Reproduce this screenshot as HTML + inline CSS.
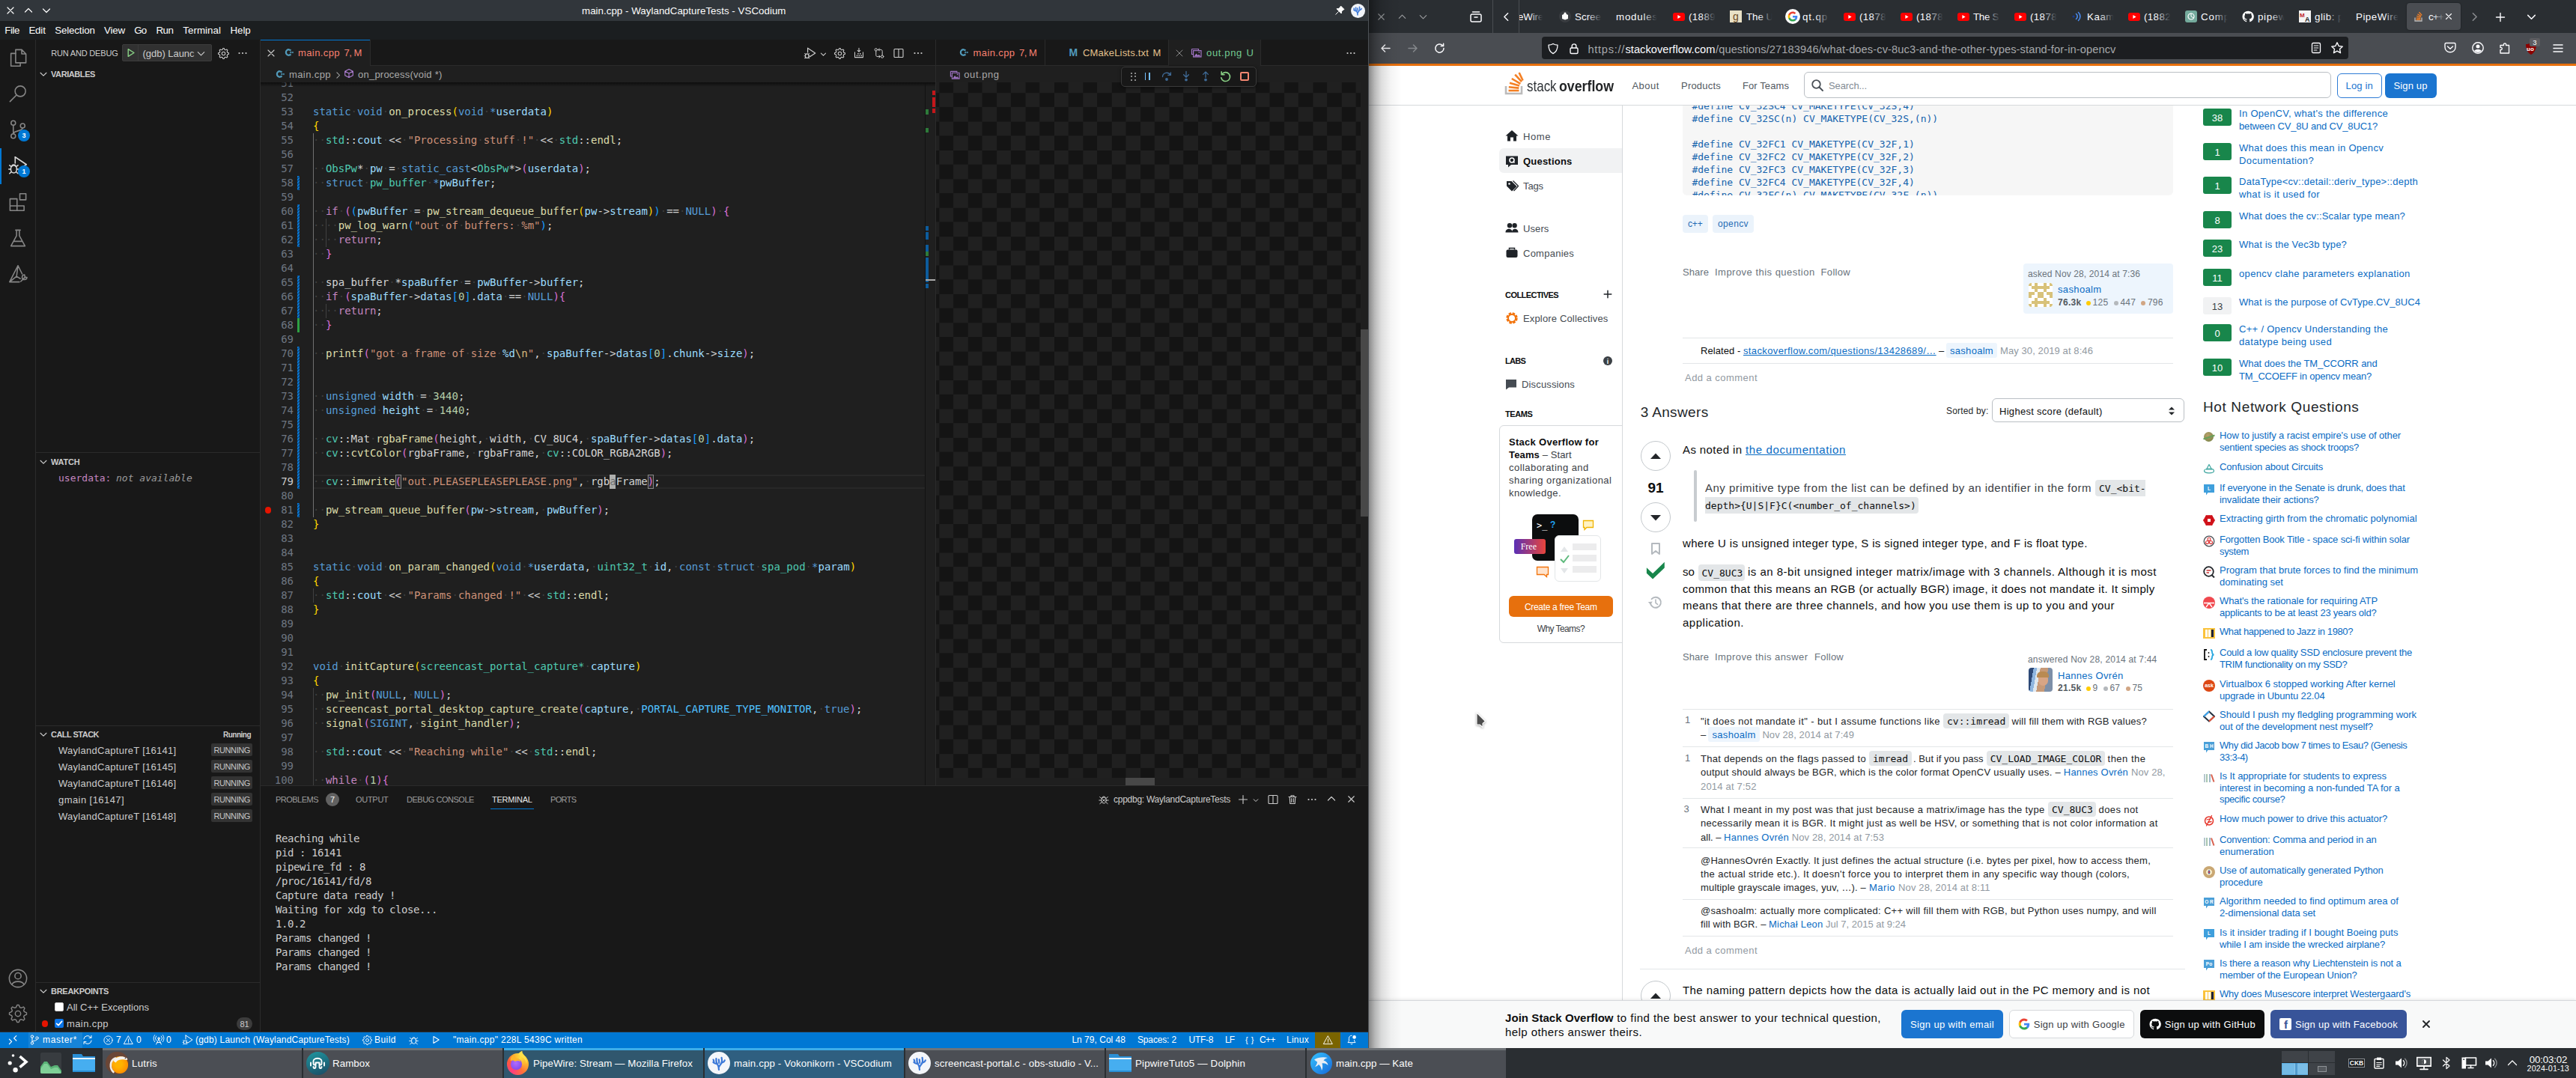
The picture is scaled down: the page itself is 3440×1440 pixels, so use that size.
<!DOCTYPE html>
<html><head><meta charset="utf-8"><title>desktop</title>
<style>
html,body{margin:0;padding:0;background:#2a2e32;}
body{width:3440px;height:1440px;position:relative;overflow:hidden;font-family:"Liberation Sans",sans-serif;}
div,span.t,svg{position:absolute;box-sizing:border-box;}
span.t{white-space:pre;display:block;}
.s{font-family:"Liberation Sans",sans-serif;}
.m{font-family:"DejaVu Sans Mono","Liberation Mono",monospace;}

</style></head><body>
<div style="left:1828px;top:0px;width:1612px;height:44px;background:#2a2e32;"></div>
<div style="left:1828px;top:44px;width:1612px;height:41px;background:#4a4d52;"></div>
<svg style="left:1836.5px;top:14.5px;" width="15" height="15" viewBox="0 0 16 16"><path d="M4 4 L12 12 M12 4 L4 12" fill="none" stroke="#9a9c9f" stroke-width="1.2" stroke-linecap="round" stroke-linejoin="round"/></svg>
<svg style="left:1864.5px;top:14.5px;" width="15" height="15" viewBox="0 0 16 16"><path d="M3.5 10 L8 5.5 L12.5 10" fill="none" stroke="#9a9c9f" stroke-width="1.2" stroke-linecap="round" stroke-linejoin="round"/></svg>
<svg style="left:1892.5px;top:14.5px;" width="15" height="15" viewBox="0 0 16 16"><path d="M3.5 6 L8 10.5 L12.5 6" fill="none" stroke="#9a9c9f" stroke-width="1.2" stroke-linecap="round" stroke-linejoin="round"/></svg>
<svg style="left:1962px;top:13px;" width="18" height="18" viewBox="0 0 18 18"><rect x="2" y="6" width="14" height="10" rx="2" fill="none" stroke="#fbfbfe" stroke-width="1.5" stroke-linecap="round" stroke-linejoin="round"/><path d="M4.5 3 H13.5 M7 10 H11" fill="none" stroke="#fbfbfe" stroke-width="1.5" stroke-linecap="round" stroke-linejoin="round"/></svg>
<div style="left:1993px;top:0px;width:1px;height:44px;background:#4a4d52;"></div>
<div style="left:2028px;top:0px;width:1px;height:44px;background:#4a4d52;"></div>
<svg style="left:2002.5px;top:13.5px;" width="17" height="17" viewBox="0 0 16 16"><path d="M10 3.5 L5.5 8 L10 12.5" fill="none" stroke="#fbfbfe" stroke-width="1.4" stroke-linecap="round" stroke-linejoin="round"/></svg>
<span class="t s" style="left:2027.00px;top:13.00px;font-size:13.33px;line-height:19px;color:#fbfbfe;letter-spacing:-0.162px;">eWire</span>
<div style="left:2043px;top:8px;width:20px;height:28px;background:linear-gradient(90deg,rgba(42,46,50,0),#2a2e32 85%)"></div>
<div style="left:2020px;top:6px;width:8px;height:32px;background:#2a2e32;"></div>
<div style="left:2028px;top:0px;width:1px;height:44px;background:#4a4d52;"></div>
<div style="left:2082px;top:14px;width:16px;height:16px;border-radius:8px;background:#3a3d41"></div>
<svg style="left:2082px;top:14px;" width="16" height="16" viewBox="0 0 16 16"><path d="M4 6 L8 4 L12 6 V11 L8 12.5 L4 11 Z" fill="#fff"/><circle cx="8" cy="4" r="1.6" fill="#fff"/></svg>
<span class="t s" style="left:2103.00px;top:13.00px;font-size:13.33px;line-height:19px;color:#fbfbfe;letter-spacing:0.036px;">Scree</span>
<div style="left:2120px;top:8px;width:22px;height:28px;background:linear-gradient(90deg,rgba(42,46,50,0),#2a2e32 85%)"></div>
<span class="t s" style="left:2158.00px;top:13.00px;font-size:13.33px;line-height:19px;color:#fbfbfe;letter-spacing:0.802px;">modules</span>
<div style="left:2194px;top:8px;width:22px;height:28px;background:linear-gradient(90deg,rgba(42,46,50,0),#2a2e32 85%)"></div>
<div style="left:2234px;top:16.5px;width:16px;height:11px;border-radius:3px;background:#ff0000"></div>
<svg style="left:2234px;top:16.5px;" width="16" height="11" viewBox="0 0 16 11"><path d="M6.4 3 L10.6 5.5 L6.4 8 Z" fill="#fff"/></svg>
<span class="t s" style="left:2255.00px;top:13.00px;font-size:13.33px;line-height:19px;color:#fbfbfe;letter-spacing:0.381px;">(1889</span>
<div style="left:2272px;top:8px;width:22px;height:28px;background:linear-gradient(90deg,rgba(42,46,50,0),#2a2e32 85%)"></div>
<div style="left:2310px;top:14px;width:16px;height:16px;background:#e9e1c6"></div>
<span class="t s" style="left:2314.11px;top:12.00px;font-size:14px;line-height:20px;color:#6b4a1e;">g</span>
<span class="t s" style="left:2332.00px;top:13.00px;font-size:13.33px;line-height:19px;color:#fbfbfe;letter-spacing:-0.060px;">The U</span>
<div style="left:2348px;top:8px;width:22px;height:28px;background:linear-gradient(90deg,rgba(42,46,50,0),#2a2e32 85%)"></div>
<div style="left:2384px;top:12px;width:20px;height:20px;border-radius:10px;background:#fff"></div>
<svg style="left:2387px;top:15px;" width="14" height="14" viewBox="0 0 16 16"><path d="M15.2 8.2 c0-.5 0-1-.1-1.4 H8 v2.8 h4 c-.2 1-.7 1.7-1.5 2.3 v1.9 h2.4 c1.5-1.3 2.3-3.3 2.3-5.600z" fill="#4285f4"/><path d="M8 15.5 c2 0 3.7-.7 4.9-1.8 l-2.4-1.9 c-.7.5-1.5.700-2.5.700-1.9 0-3.6-1.3-4.1-3.1 H1.4 v1.9 C2.6 13.8 5.1 15.5 8 15.500z" fill="#34a853"/><path d="M3.9 9.4 c-.3-.9-.3-1.9 0-2.8 V4.7 H1.4 c-1 2-1 4.6 0 6.600z" fill="#fbbc05"/><path d="M8 3.5 c1.1 0 2 .4 2.8 1.1 l2.1-2.1 C11.6 1.2 9.9.5 8 .5 5.1.5 2.6 2.2 1.4 4.7 l2.5 1.9 C4.4 4.8 6.1 3.5 8 3.500z" fill="#ea4335"/></svg>
<span class="t s" style="left:2407.00px;top:13.00px;font-size:13.33px;line-height:19px;color:#fbfbfe;letter-spacing:0.870px;">qt.qp</span>
<div style="left:2424px;top:8px;width:22px;height:28px;background:linear-gradient(90deg,rgba(42,46,50,0),#2a2e32 85%)"></div>
<div style="left:2462px;top:16.5px;width:16px;height:11px;border-radius:3px;background:#ff0000"></div>
<svg style="left:2462px;top:16.5px;" width="16" height="11" viewBox="0 0 16 11"><path d="M6.4 3 L10.6 5.5 L6.4 8 Z" fill="#fff"/></svg>
<span class="t s" style="left:2483.00px;top:13.00px;font-size:13.33px;line-height:19px;color:#fbfbfe;letter-spacing:0.381px;">(1878</span>
<div style="left:2500px;top:8px;width:22px;height:28px;background:linear-gradient(90deg,rgba(42,46,50,0),#2a2e32 85%)"></div>
<div style="left:2538px;top:16.5px;width:16px;height:11px;border-radius:3px;background:#ff0000"></div>
<svg style="left:2538px;top:16.5px;" width="16" height="11" viewBox="0 0 16 11"><path d="M6.4 3 L10.6 5.5 L6.4 8 Z" fill="#fff"/></svg>
<span class="t s" style="left:2559.00px;top:13.00px;font-size:13.33px;line-height:19px;color:#fbfbfe;letter-spacing:0.381px;">(1878</span>
<div style="left:2576px;top:8px;width:22px;height:28px;background:linear-gradient(90deg,rgba(42,46,50,0),#2a2e32 85%)"></div>
<div style="left:2614px;top:16.5px;width:16px;height:11px;border-radius:3px;background:#ff0000"></div>
<svg style="left:2614px;top:16.5px;" width="16" height="11" viewBox="0 0 16 11"><path d="M6.4 3 L10.6 5.5 L6.4 8 Z" fill="#fff"/></svg>
<span class="t s" style="left:2635.00px;top:13.00px;font-size:13.33px;line-height:19px;color:#fbfbfe;letter-spacing:-0.313px;">The S</span>
<div style="left:2652px;top:8px;width:22px;height:28px;background:linear-gradient(90deg,rgba(42,46,50,0),#2a2e32 85%)"></div>
<div style="left:2690px;top:16.5px;width:16px;height:11px;border-radius:3px;background:#ff0000"></div>
<svg style="left:2690px;top:16.5px;" width="16" height="11" viewBox="0 0 16 11"><path d="M6.4 3 L10.6 5.5 L6.4 8 Z" fill="#fff"/></svg>
<span class="t s" style="left:2711.00px;top:13.00px;font-size:13.33px;line-height:19px;color:#fbfbfe;letter-spacing:0.381px;">(1878</span>
<div style="left:2728px;top:8px;width:22px;height:28px;background:linear-gradient(90deg,rgba(42,46,50,0),#2a2e32 85%)"></div>
<svg style="left:2766px;top:14px;" width="16" height="16" viewBox="0 0 16 16"><circle cx="3" cy="8" r="1.6" fill="#1b3a8a"/><path d="M6.5 4.5 A4.5 4.5 0 0 1 6.5 11.5 M9.5 2.5 A7.5 7.5 0 0 1 9.5 13.5" fill="none" stroke="#4a8cf0" stroke-width="1.6" stroke-linecap="round" stroke-linejoin="round"/></svg>
<span class="t s" style="left:2787.00px;top:13.00px;font-size:13.33px;line-height:19px;color:#fbfbfe;letter-spacing:0.544px;">Kaam</span>
<div style="left:2804px;top:8px;width:22px;height:28px;background:linear-gradient(90deg,rgba(42,46,50,0),#2a2e32 85%)"></div>
<div style="left:2842px;top:16.5px;width:16px;height:11px;border-radius:3px;background:#ff0000"></div>
<svg style="left:2842px;top:16.5px;" width="16" height="11" viewBox="0 0 16 11"><path d="M6.4 3 L10.6 5.5 L6.4 8 Z" fill="#fff"/></svg>
<span class="t s" style="left:2863.00px;top:13.00px;font-size:13.33px;line-height:19px;color:#fbfbfe;letter-spacing:0.381px;">(1882</span>
<div style="left:2880px;top:8px;width:22px;height:28px;background:linear-gradient(90deg,rgba(42,46,50,0),#2a2e32 85%)"></div>
<div style="left:2918px;top:14px;width:16px;height:16px;border-radius:3px;background:#74aa9c"></div>
<svg style="left:2918px;top:14px;" width="16" height="16" viewBox="0 0 16 16"><circle cx="8" cy="8" r="4" fill="none" stroke="#fff" stroke-width="1.2" stroke-linecap="round" stroke-linejoin="round"/><path d="M8 4 V8 L11.5 10" fill="none" stroke="#fff" stroke-width="1" stroke-linecap="round" stroke-linejoin="round"/></svg>
<span class="t s" style="left:2939.00px;top:13.00px;font-size:13.33px;line-height:19px;color:#fbfbfe;letter-spacing:0.861px;">Comp</span>
<div style="left:2956px;top:8px;width:22px;height:28px;background:linear-gradient(90deg,rgba(42,46,50,0),#2a2e32 85%)"></div>
<svg style="left:2994px;top:14px;" width="16" height="16" viewBox="0 0 16 16"><path d="M8 .7 a7.5 7.5 0 0 0 -2.4 14.6 c.4.1.5-.2.5-.4 v-1.3 c-2.1.500-2.5-1-2.5-1 -.3-.9-.8-1.1-.8-1.1 -.7-.5.1-.5.1-.5 .700.1 1.1.800 1.1.800 .700 1.1 1.8.800 2.2.600 .100-.5.3-.8.5-1 -1.7-.2-3.4-.8-3.4-3.7 0-.8.3-1.5.800-2 -.1-.2-.3-1 .1-2 0 0 .600-.2 2.1.800 a7.2 7.2 0 0 1 3.8 0 c1.4-1 2.1-.8 2.1-.8 .4 1 .200 1.8.100 2 .500.5.800 1.2.800 2 0 2.9-1.8 3.5-3.4 3.7 .300.2.500.7.500 1.4 v2.1 c0 .200.1.500.5.400 A7.5 7.5 0 0 0 8 .7z" fill="#fff"/></svg>
<span class="t s" style="left:3015.00px;top:13.00px;font-size:13.33px;line-height:19px;color:#fbfbfe;letter-spacing:0.634px;">pipew</span>
<div style="left:3032px;top:8px;width:22px;height:28px;background:linear-gradient(90deg,rgba(42,46,50,0),#2a2e32 85%)"></div>
<div style="left:3070px;top:14px;width:16px;height:16px;background:#f4f4f4"></div>
<span class="t s" style="left:3071.00px;top:14.00px;font-size:8px;line-height:13px;color:#c0222a;font-weight:700;">M</span>
<span class="t s" style="left:3078.00px;top:19.00px;font-size:9px;line-height:14px;color:#222;font-weight:700;">A</span>
<span class="t s" style="left:3091.00px;top:13.00px;font-size:13.33px;line-height:19px;color:#fbfbfe;letter-spacing:0.490px;">glib: p</span>
<div style="left:3108px;top:8px;width:22px;height:28px;background:linear-gradient(90deg,rgba(42,46,50,0),#2a2e32 85%)"></div>
<span class="t s" style="left:3146.00px;top:13.00px;font-size:13.33px;line-height:19px;color:#fbfbfe;letter-spacing:0.491px;">PipeWire</span>
<div style="left:3184px;top:8px;width:22px;height:28px;background:linear-gradient(90deg,rgba(42,46,50,0),#2a2e32 85%)"></div>
<div style="left:3214px;top:4px;width:72px;height:36px;border-radius:4px;background:#4a4d52;box-shadow:0 0 2px rgba(0,0,0,.5)"></div>
<svg style="left:3222px;top:14px;" width="16" height="16" viewBox="0 0 16 16"><path d="M3 9.5 V14 H12 V9.5" fill="none" stroke="#bcbbbb" stroke-width="1.3"/><path d="M4.6 12 H10.4 M4.7 9.8 L10.3 10.4 M5.2 7.3 L10.6 8.8 M6.4 4.7 L11.2 7.6 M8.4 2.3 L12.2 6.4" fill="none" stroke="#f48024" stroke-width="1.3"/></svg>
<span class="t s" style="left:3243.00px;top:13.00px;font-size:13.33px;line-height:19px;color:#fbfbfe;letter-spacing:-0.745px;">c++</span>
<div style="left:3250px;top:8px;width:14px;height:28px;background:linear-gradient(90deg,rgba(74,77,82,0),#4a4d52)"></div>
<svg style="left:3263.0px;top:15.0px;" width="14" height="14" viewBox="0 0 16 16"><path d="M4 4 L12 12 M12 4 L4 12" fill="none" stroke="#fbfbfe" stroke-width="1.3" stroke-linecap="round" stroke-linejoin="round"/></svg>
<svg style="left:3295.5px;top:13.5px;" width="17" height="17" viewBox="0 0 16 16"><path d="M6 3.5 L10.5 8 L6 12.5" fill="none" stroke="#8b8d91" stroke-width="1.4" stroke-linecap="round" stroke-linejoin="round"/></svg>
<svg style="left:3331.0px;top:14.5px;" width="16" height="16" viewBox="0 0 16 16"><path d="M8 2.5 V13.5 M2.5 8 H13.5" fill="none" stroke="#fbfbfe" stroke-width="1.4" stroke-linecap="round" stroke-linejoin="round"/></svg>
<svg style="left:3371.5px;top:13.5px;" width="17" height="17" viewBox="0 0 16 16"><path d="M3.5 6 L8 10.5 L12.5 6" fill="none" stroke="#fbfbfe" stroke-width="1.4" stroke-linecap="round" stroke-linejoin="round"/></svg>
<svg style="left:1842px;top:56px;" width="17" height="17" viewBox="0 0 17 17"><path d="M14 8.5 H3 M7.5 4 L3 8.5 L7.5 13" fill="none" stroke="#fbfbfe" stroke-width="1.5" stroke-linecap="round" stroke-linejoin="round"/></svg>
<svg style="left:1878px;top:56px;" width="17" height="17" viewBox="0 0 17 17"><path d="M3 8.5 H14 M9.5 4 L14 8.5 L9.5 13" fill="none" stroke="#85888c" stroke-width="1.5" stroke-linecap="round" stroke-linejoin="round"/></svg>
<svg style="left:1914px;top:56px;" width="17" height="17" viewBox="0 0 17 17"><path d="M14 8.5 A5.6 5.6 0 1 1 12.3 4.5 M13.6 2.2 V5.6 H10.2" fill="none" stroke="#fbfbfe" stroke-width="1.5" stroke-linecap="round" stroke-linejoin="round"/></svg>
<div style="left:2059px;top:49px;width:1077px;height:30px;border-radius:4px;background:#1c1e21"></div>
<svg style="left:2066px;top:56.5px;" width="16" height="16" viewBox="0 0 16 16"><path d="M8 1.5 C10 2.8 12 3.2 14 3.2 C14 9 12 12.5 8 14.6 C4 12.5 2 9 2 3.2 C4 3.2 6 2.8 8 1.5 Z" fill="none" stroke="#fbfbfe" stroke-width="1.3" stroke-linecap="round" stroke-linejoin="round"/></svg>
<svg style="left:2094px;top:56px;" width="16" height="17" viewBox="0 0 16 17"><rect x="3" y="8" width="10" height="7.5" rx="1.5" fill="none" stroke="#fbfbfe" stroke-width="1.4" stroke-linecap="round" stroke-linejoin="round"/><path d="M5.2 8 V5.5 C5.2 2 10.8 2 10.8 5.5 V8" fill="none" stroke="#fbfbfe" stroke-width="1.4" stroke-linecap="round" stroke-linejoin="round"/></svg>
<span class="t s" style="left:2120.50px;top:56.00px;font-size:14.67px;line-height:20px;color:#a6a8ab;letter-spacing:0.684px;">https://</span>
<span class="t s" style="left:2170.50px;top:56.00px;font-size:14.67px;line-height:20px;color:#fbfbfe;letter-spacing:0.009px;">stackoverflow.com</span>
<span class="t s" style="left:2291.00px;top:56.00px;font-size:14.67px;line-height:20px;color:#a6a8ab;letter-spacing:0.085px;">/questions/27183946/what-does-cv-8uc3-and-the-other-types-stand-for-in-opencv</span>
<svg style="left:3084.5px;top:56px;" width="16" height="16" viewBox="0 0 16 16"><rect x="2.5" y="1.5" width="11" height="13" rx="1.5" fill="none" stroke="#fbfbfe" stroke-width="1.3" stroke-linecap="round" stroke-linejoin="round"/><path d="M5.2 5 H10.8 M5.2 8 H10.8 M5.2 11 H9" fill="none" stroke="#fbfbfe" stroke-width="1.1" stroke-linecap="round" stroke-linejoin="round"/></svg>
<svg style="left:3112px;top:55px;" width="18" height="18" viewBox="0 0 18 18"><path d="M9 1.8 L11.2 6.5 L16.3 7.1 L12.5 10.6 L13.5 15.7 L9 13.2 L4.5 15.7 L5.5 10.6 L1.7 7.1 L6.8 6.5 Z" fill="none" stroke="#fbfbfe" stroke-width="1.4" stroke-linecap="round" stroke-linejoin="round"/></svg>
<svg style="left:3263px;top:55px;" width="18" height="18" viewBox="0 0 18 18"><path d="M2 4 C2 3 2.8 2.5 3.5 2.5 H14.5 C15.2 2.5 16 3 16 4 V8 C16 17 2 17 2 8 Z" fill="none" stroke="#fbfbfe" stroke-width="1.4" stroke-linecap="round" stroke-linejoin="round"/><path d="M5.5 7 L9 10.2 L12.5 7" fill="none" stroke="#fbfbfe" stroke-width="1.5" stroke-linecap="round" stroke-linejoin="round"/></svg>
<svg style="left:3299.5px;top:55px;" width="18" height="18" viewBox="0 0 18 18"><circle cx="9" cy="9" r="7.2" fill="none" stroke="#fbfbfe" stroke-width="1.4" stroke-linecap="round" stroke-linejoin="round"/><circle cx="9" cy="7" r="2.5" fill="#fbfbfe"/><path d="M4.2 12.8 C6 10.4 12 10.4 13.8 12.8 C12 15.8 6 15.8 4.2 12.8 Z" fill="#fbfbfe"/></svg>
<svg style="left:3336px;top:54.5px;" width="18" height="18" viewBox="0 0 18 18"><path d="M3 16 V11.5 C6 12.5 6 7.5 3 8.5 V5.5 H7.5 C6.5 2 11.5 2 10.5 5.5 H14.5 V16 Z" fill="none" stroke="#fbfbfe" stroke-width="1.4" stroke-linecap="round" stroke-linejoin="round"/></svg>
<svg style="left:3371px;top:56px;" width="18" height="18" viewBox="0 0 18 18"><path d="M9 1 C11 2.5 13.5 3 16 3 C16 10 13.5 14.5 9 17 C4.5 14.5 2 10 2 3 C4.5 3 7 2.5 9 1 Z" fill="#8b0000"/></svg>
<span class="t s" style="left:3374.11px;top:59.00px;font-size:8px;line-height:13px;color:#fff;font-weight:700;">uo</span>
<div style="left:3378px;top:51px;width:14px;height:11px;border-radius:2px;background:#5d5d61"></div>
<span class="t s" style="left:3382.36px;top:49.00px;font-size:9.5px;line-height:15px;color:#fff;">3</span>
<svg style="left:3407px;top:56px;" width="18" height="17" viewBox="0 0 18 17"><path d="M3 4 H15 M3 8.5 H15 M3 13 H15" fill="none" stroke="#fbfbfe" stroke-width="1.5" stroke-linecap="round" stroke-linejoin="round"/></svg>
<div style="left:1828px;top:85px;width:1612px;height:3px;background:#e7700d;"></div>
<div style="left:1828px;top:88px;width:1612px;height:1312px;background:#fff;"></div>
<div style="left:1828px;top:140px;width:1612px;height:1px;background:#d6d9dc;"></div>
<svg style="left:2009px;top:96px;" width="26" height="32" viewBox="0 0 26 32"><path d="M2 19 V29 H23 V19" fill="none" stroke="#bcbbbb" stroke-width="2.6"/><path d="M5.5 25 H19.5" stroke="#f48024" stroke-width="2.6"/><path d="M5.8 20.2 L19.3 21.6" stroke="#f48024" stroke-width="2.6"/><path d="M7 14.8 L20 18.4" stroke="#f48024" stroke-width="2.6"/><path d="M9.8 9 L21.4 15.8" stroke="#f48024" stroke-width="2.6"/><path d="M14.2 3.6 L23 13.2" stroke="#f48024" stroke-width="2.6"/><path d="M19.6 1 L24.6 11.5" stroke="#f48024" stroke-width="2.6"/></svg>
<span class="t s" style="left:2039.00px;top:101.00px;font-size:21px;line-height:27px;color:#2f3337;transform:scaleX(0.808);transform-origin:0 0;">stack</span>
<span class="t s" style="left:2082.00px;top:101.00px;font-size:21px;line-height:27px;color:#222426;font-weight:700;transform:scaleX(0.845);transform-origin:0 0;">overflow</span>
<span class="t s" style="left:2179.40px;top:105.00px;font-size:13px;line-height:19px;color:#525960;letter-spacing:0.525px;">About</span>
<span class="t s" style="left:2245.00px;top:105.00px;font-size:13px;line-height:19px;color:#525960;letter-spacing:0.212px;">Products</span>
<span class="t s" style="left:2327.00px;top:105.00px;font-size:13px;line-height:19px;color:#525960;letter-spacing:0.093px;">For Teams</span>
<div style="left:2409px;top:96px;width:704px;height:35px;border:1px solid #babfc4;border-radius:6px;background:#fff"></div>
<svg style="left:2418px;top:104.5px;" width="18" height="18" viewBox="0 0 18 18"><circle cx="7.5" cy="7.5" r="5.3" fill="none" stroke="#4b5158" stroke-width="1.8" stroke-linecap="round" stroke-linejoin="round"/><path d="M11.5 11.5 L16 16" fill="none" stroke="#4b5158" stroke-width="2" stroke-linecap="round" stroke-linejoin="round"/></svg>
<span class="t s" style="left:2442.00px;top:105.00px;font-size:13px;line-height:19px;color:#838c95;letter-spacing:-0.114px;">Search...</span>
<div style="left:3121px;top:98px;width:60px;height:33px;border:1px solid #2e7cd6;border-radius:6px;background:#fff"></div>
<span class="t s" style="left:3132.50px;top:105.00px;font-size:13px;line-height:19px;color:#1b75d0;letter-spacing:0.180px;">Log in</span>
<div style="left:3185px;top:98px;width:69px;height:33px;border-radius:6px;background:#1b75d0"></div>
<span class="t s" style="left:3196.50px;top:105.00px;font-size:13px;line-height:19px;color:#fff;letter-spacing:0.144px;">Sign up</span>
<div style="left:2166px;top:141px;width:1px;height:1196px;background:#d6d9dc;"></div>
<div style="left:2002px;top:198px;width:164px;height:33px;background:#f1f2f3;border-radius:6px 0 0 6px"></div>
<svg style="left:2010px;top:173px;" width="18" height="16" viewBox="0 0 18 16"><path d="M9 1 L17.5 8.5 H15 V15.5 H11 V10.5 H7 V15.5 H3 V8.5 H0.5 Z" fill="#1f2328"/></svg>
<span class="t s" style="left:2034.00px;top:173.00px;font-size:13px;line-height:19px;color:#454b52;letter-spacing:0.581px;">Home</span>
<svg style="left:2010px;top:207px;" width="18" height="17" viewBox="0 0 18 17"><path d="M1 1.5 H17 V13 H8 L4 16.5 V13 H1 Z" fill="#1f2328"/><circle cx="9" cy="7" r="3" fill="none" stroke="#fff" stroke-width="1.6"/><path d="M10.5 8.5 L12.5 10.5" stroke="#fff" stroke-width="1.6"/></svg>
<span class="t s" style="left:2034.00px;top:206.00px;font-size:13px;line-height:19px;color:#0c0d0e;letter-spacing:0.215px;font-weight:700;">Questions</span>
<svg style="left:2010px;top:240px;" width="18" height="16" viewBox="0 0 18 16"><path d="M2 2 H8.5 L15.5 9 L9 15.5 L2 8.5 Z" fill="#1f2328"/><circle cx="5.5" cy="5.5" r="1.3" fill="#fff"/><path d="M10.5 1.5 L17.5 8.5 L11.5 15" fill="none" stroke="#1f2328" stroke-width="1.3"/></svg>
<span class="t s" style="left:2034.00px;top:239.00px;font-size:13px;line-height:19px;color:#454b52;letter-spacing:-0.115px;">Tags</span>
<svg style="left:2010px;top:297px;" width="18" height="15" viewBox="0 0 18 15"><circle cx="6" cy="4.2" r="3.2" fill="#1f2328"/><circle cx="12.6" cy="4.2" r="3.2" fill="#1f2328"/><path d="M0.5 13.5 C0.5 7.5 8.5 7.5 9.3 12 C10 7.5 17.5 7.5 17.5 13.5 Z" fill="#1f2328"/></svg>
<span class="t s" style="left:2034.00px;top:296.00px;font-size:13px;line-height:19px;color:#454b52;letter-spacing:0.091px;">Users</span>
<svg style="left:2010px;top:330px;" width="18" height="15" viewBox="0 0 18 15"><rect x="1.5" y="3.5" width="15" height="10.5" rx="2" fill="#1f2328"/><path d="M5.5 3.5 V1.5 H12.5 V3.5" fill="none" stroke="#1f2328" stroke-width="1.5"/></svg>
<span class="t s" style="left:2034.00px;top:329.00px;font-size:13px;line-height:19px;color:#454b52;letter-spacing:0.249px;">Companies</span>
<span class="t s" style="left:2010.00px;top:386.00px;font-size:11px;line-height:16px;color:#0c0d0e;letter-spacing:-0.546px;font-weight:700;">COLLECTIVES</span>
<svg style="left:2139.5px;top:386.0px;" width="14" height="14" viewBox="0 0 16 16"><path d="M8 2.5 V13.5 M2.5 8 H13.5" fill="none" stroke="#1f2328" stroke-width="1.7" stroke-linecap="round" stroke-linejoin="round"/></svg>
<svg style="left:2009.5px;top:416px;" width="18" height="18" viewBox="0 0 18 18"><circle cx="9" cy="9" r="6" fill="none" stroke="#f2740d" stroke-width="3.4" stroke-dasharray="3.2 1.5"/><circle cx="9" cy="9" r="5" fill="none" stroke="#f2740d" stroke-width="2"/></svg>
<span class="t s" style="left:2034.00px;top:416.00px;font-size:13px;line-height:19px;color:#454b52;letter-spacing:0.156px;">Explore Collectives</span>
<span class="t s" style="left:2010.00px;top:474.00px;font-size:11px;line-height:16px;color:#0c0d0e;letter-spacing:-0.736px;font-weight:700;">LABS</span>
<div style="left:2141px;top:476px;width:12px;height:12px;border-radius:6px;background:#3b4045"></div>
<span class="t s" style="left:2145.75px;top:476.00px;font-size:9px;line-height:14px;color:#fff;font-weight:700;">i</span>
<svg style="left:2010px;top:506px;" width="16" height="15" viewBox="0 0 16 15"><path d="M1 1 H15 V11.5 H5 L1 14.5 Z" fill="#454b52"/></svg>
<span class="t s" style="left:2032.00px;top:504.00px;font-size:13px;line-height:19px;color:#454b52;letter-spacing:0.150px;">Discussions</span>
<span class="t s" style="left:2010.00px;top:545.00px;font-size:11px;line-height:16px;color:#0c0d0e;letter-spacing:-0.400px;font-weight:700;">TEAMS</span>
<div style="left:2002px;top:568px;width:170px;height:291px;border:1px solid #d6d9dc;border-radius:6px 0 0 6px;background:#fff"></div>
<div style="left:2166px;top:560px;width:8px;height:310px;background:#fff;"></div>
<div style="left:2166px;top:141px;width:1px;height:1196px;background:#d6d9dc;"></div>
<span class="t s" style="left:2015.00px;top:581.00px;font-size:13px;line-height:19px;color:#0c0d0e;letter-spacing:0.285px;font-weight:700;">Stack Overflow for</span>
<span class="t s" style="left:2015.00px;top:598.00px;font-size:13px;line-height:19px;color:#0c0d0e;letter-spacing:0.155px;font-weight:700;">Teams</span>
<span class="t s" style="left:2056.00px;top:598.00px;font-size:13px;line-height:19px;color:#3b4045;letter-spacing:0.099px;"> – Start</span>
<span class="t s" style="left:2015.00px;top:615.00px;font-size:13px;line-height:19px;color:#3b4045;letter-spacing:0.452px;">collaborating and</span>
<span class="t s" style="left:2015.00px;top:632.00px;font-size:13px;line-height:19px;color:#3b4045;letter-spacing:0.464px;">sharing organizational</span>
<span class="t s" style="left:2015.00px;top:649.00px;font-size:13px;line-height:19px;color:#3b4045;letter-spacing:0.423px;">knowledge.</span>
<div style="left:2046px;top:687px;width:62px;height:62px;border-radius:7px;background:#0c0d0e"></div>
<span class="t m" style="left:2052.00px;top:693.00px;font-size:12px;line-height:18px;color:#fff;">&gt;_</span>
<span class="t s" style="left:2070.00px;top:692.00px;font-size:12px;line-height:18px;color:#1ea1f2;font-weight:700;">?</span>
<div style="left:2076px;top:715px;width:62px;height:62px;border-radius:6px;background:#fff;border:1px solid #e3e6e8"></div>
<div style="left:2100px;top:726px;width:32px;height:9px;background:#ececed;"></div>
<div style="left:2100px;top:741px;width:32px;height:9px;background:#ececed;"></div>
<div style="left:2100px;top:756px;width:32px;height:9px;background:#ececed;"></div>
<svg style="left:2082px;top:728px;" width="14" height="40" viewBox="0 0 14 40"><path d="M2 9 L7 2 L12 9 Z" fill="#e3e6e8"/><path d="M2 31 L7 38 L12 31 Z" fill="#e3e6e8"/><path d="M2 19 L6 23 L13 14" fill="none" stroke="#5eba7d" stroke-width="2"/></svg>
<div style="left:2022px;top:720px;width:42px;height:20px;border-radius:3px;background:linear-gradient(90deg,#5a2fb5,#e8453c)"></div>
<span class="t s" style="left:2030.66px;top:721.00px;font-size:12px;line-height:18px;color:#fff;font-family:'Liberation Serif',serif;">Free</span>
<svg style="left:2113px;top:694px;" width="16" height="15" viewBox="0 0 16 15"><path d="M1.5 1.5 H14.5 V10.5 H6 L3 13.5 V10.5 H1.5 Z" fill="#fff3c4" stroke="#f0b400" stroke-width="1.3"/></svg>
<svg style="left:2051px;top:756px;" width="18" height="16" viewBox="0 0 18 16"><path d="M1.5 1.5 H16.5 V11.5 H14.5 V14.5 L11 11.5 H1.5 Z" fill="#ffe3cc" stroke="#f2740d" stroke-width="1.3"/></svg>
<div style="left:2015px;top:796px;width:139px;height:28px;border-radius:6px;background:#e7700d"></div>
<span class="t s" style="left:2036.00px;top:802.00px;font-size:12px;line-height:18px;color:#fff;letter-spacing:-0.328px;">Create a free Team</span>
<span class="t s" style="left:2052.70px;top:831.00px;font-size:12px;line-height:18px;color:#3b4045;letter-spacing:-0.583px;">Why Teams?</span>
<div style="left:2247px;top:141px;width:655px;height:120px;border-radius:0 0 6px 6px;background:#f6f6f6;overflow:hidden">
<span class="t m" style="left:12.40px;top:-7.91px;font-size:13px;line-height:17px;color:#1563ad;">#define CV_32SC4 CV_MAKETYPE(CV_32S,4)</span>
<span class="t m" style="left:12.40px;top:9.09px;font-size:13px;line-height:17px;color:#1563ad;">#define CV_32SC(n) CV_MAKETYPE(CV_32S,(n))</span>
<span class="t m" style="left:12.40px;top:43.09px;font-size:13px;line-height:17px;color:#1563ad;">#define CV_32FC1 CV_MAKETYPE(CV_32F,1)</span>
<span class="t m" style="left:12.40px;top:60.09px;font-size:13px;line-height:17px;color:#1563ad;">#define CV_32FC2 CV_MAKETYPE(CV_32F,2)</span>
<span class="t m" style="left:12.40px;top:77.09px;font-size:13px;line-height:17px;color:#1563ad;">#define CV_32FC3 CV_MAKETYPE(CV_32F,3)</span>
<span class="t m" style="left:12.40px;top:94.09px;font-size:13px;line-height:17px;color:#1563ad;">#define CV_32FC4 CV_MAKETYPE(CV_32F,4)</span>
<span class="t m" style="left:12.40px;top:111.09px;font-size:13px;line-height:17px;color:#1563ad;">#define CV_32FC(n) CV_MAKETYPE(CV_32F,(n))</span>
</div>
<div style="left:2247px;top:287px;width:34px;height:24px;border-radius:4px;background:#ebf3fb"></div>
<span class="t s" style="left:2254.00px;top:290.00px;font-size:12px;line-height:18px;color:#1f6bb5;letter-spacing:-0.172px;">c++</span>
<div style="left:2287px;top:287px;width:55px;height:24px;border-radius:4px;background:#ebf3fb"></div>
<span class="t s" style="left:2294.00px;top:290.00px;font-size:12px;line-height:18px;color:#1f6bb5;letter-spacing:0.384px;">opencv</span>
<span class="t s" style="left:2247.00px;top:354.00px;font-size:13px;line-height:19px;color:#6a737c;letter-spacing:0.062px;">Share</span>
<span class="t s" style="left:2290.00px;top:354.00px;font-size:13px;line-height:19px;color:#6a737c;letter-spacing:0.478px;">Improve this question</span>
<span class="t s" style="left:2431.60px;top:354.00px;font-size:13px;line-height:19px;color:#6a737c;letter-spacing:0.306px;">Follow</span>
<div style="left:2701.600px;top:352px;width:200px;height:67px;border-radius:4px;background:#edf5fd"></div>
<span class="t s" style="left:2708.00px;top:357.00px;font-size:12px;line-height:18px;color:#6a737c;letter-spacing:0.124px;">asked Nov 28, 2014 at 7:36</span>
<div style="left:2708.600px;top:378px;width:32px;height:32px;border-radius:4px;background:#fff;overflow:hidden"><svg style="left:0;top:0" width="32" height="32" viewBox="0 0 8 8"><path d="M0 0h1v1h-1z M2 0h1v1h-1z M5 0h1v1h-1z M7 0h1v1h-1z M1 1h2v1h-2z M5 1h2v1h-2z M3 1h2v1h-2z M0 3h1v2h-1z M7 3h1v2h-1z M2 2h1v1h-1z M5 2h1v1h-1z M1 3h1v1h-1z M3 3h2v2h-2z M6 3h1v1h-1z M2 5h1v1h-1z M5 5h1v1h-1z M1 6h2v1h-2z M5 6h2v1h-2z M0 7h1v1h-1z M3 6h2v1h-2z M7 7h1v1h-1z M2 7h1v1h-1z M5 7h1v1h-1z" fill="#d8c27a"/></svg></div>
<span class="t s" style="left:2748.00px;top:377.00px;font-size:13px;line-height:19px;color:#0a6cc4;letter-spacing:0.358px;">sashoalm</span>
<span class="t s" style="left:2748.00px;top:395.00px;font-size:12px;line-height:18px;color:#525960;letter-spacing:0.294px;font-weight:700;">76.3k</span>
<div style="left:2785.5px;top:401.6px;width:6px;height:6px;border-radius:3px;background:#ffcc01"></div>
<span class="t s" style="left:2794.50px;top:395.00px;font-size:12px;line-height:18px;color:#6a737c;letter-spacing:0.326px;">125</span>
<div style="left:2822.5px;top:401.6px;width:6px;height:6px;border-radius:3px;background:#b4b8bc"></div>
<span class="t s" style="left:2831.50px;top:395.00px;font-size:12px;line-height:18px;color:#6a737c;letter-spacing:0.159px;">447</span>
<div style="left:2858.5px;top:401.6px;width:6px;height:6px;border-radius:3px;background:#d1a684"></div>
<span class="t s" style="left:2868.00px;top:395.00px;font-size:12px;line-height:18px;color:#6a737c;letter-spacing:0.159px;">796</span>
<div style="left:2247px;top:451px;width:655px;height:1px;background:#e3e6e8;"></div>
<div style="left:2247px;top:484.5px;width:655px;height:1px;background:#e3e6e8;"></div>
<span class="t s" style="left:2271.00px;top:459.00px;font-size:13px;line-height:19px;color:#0c0d0e;letter-spacing:0.064px;">Related - </span>
<span class="t s" style="left:2328.00px;top:459.00px;font-size:13px;line-height:19px;color:#0a6cc4;letter-spacing:0.370px;text-decoration:underline;">stackoverflow.com/questions/13428689/…</span>
<span class="t s" style="left:2589.00px;top:459.00px;font-size:13px;line-height:19px;color:#0c0d0e;">–</span>
<div style="left:2599px;top:458px;width:68px;height:20px;border-radius:3px;background:#edf5fd"></div>
<span class="t s" style="left:2604.00px;top:459.00px;font-size:13px;line-height:19px;color:#0a6cc4;letter-spacing:0.295px;">sashoalm</span>
<span class="t s" style="left:2671.00px;top:459.00px;font-size:13px;line-height:19px;color:#9199a1;letter-spacing:0.093px;">May 30, 2019 at 8:46</span>
<span class="t s" style="left:2250.00px;top:495.00px;font-size:13px;line-height:19px;color:#9199a1;letter-spacing:0.458px;">Add a comment</span>
<span class="t s" style="left:2190.70px;top:538.00px;font-size:19px;line-height:25px;color:#232629;letter-spacing:0.350px;">3 Answers</span>
<span class="t s" style="left:2599.00px;top:540.00px;font-size:12px;line-height:18px;color:#232629;letter-spacing:0.180px;">Sorted by:</span>
<div style="left:2660px;top:532px;width:257px;height:32px;border:1px solid #babfc4;border-radius:6px;background:#fff"></div>
<span class="t s" style="left:2670.00px;top:540.00px;font-size:13px;line-height:19px;color:#0c0d0e;letter-spacing:0.292px;">Highest score (default)</span>
<svg style="left:2893px;top:541px;" width="14" height="16" viewBox="0 0 14 16"><path d="M3 6.5 L7 2.5 L11 6.5 Z M3 9.5 L7 13.5 L11 9.5 Z" fill="#232629"/></svg>
<div style="left:2191px;top:589px;width:40px;height:40px;border-radius:20px;border:1px solid #c3c8cc;background:#fff"></div>
<svg style="left:2202px;top:602.5px;" width="18" height="13" viewBox="0 0 18 13"><path d="M2 10 L9 2.5 L16 10 Z" fill="#232629"/></svg>
<div style="left:2191px;top:671px;width:40px;height:40px;border-radius:20px;border:1px solid #c3c8cc;background:#fff"></div>
<svg style="left:2202px;top:684.5px;" width="18" height="13" viewBox="0 0 18 13"><path d="M2 3 L9 10.5 L16 3 Z" fill="#232629"/></svg>
<span class="t s" style="left:2200.43px;top:639.00px;font-size:19px;line-height:25px;color:#0c0d0e;font-weight:700;">91</span>
<svg style="left:2204px;top:724px;" width="14" height="18" viewBox="0 0 14 18"><path d="M2 2 H12 V16 L7 12 L2 16 Z" fill="none" stroke="#b4b9be" stroke-width="2" stroke-linecap="round" stroke-linejoin="round"/></svg>
<svg style="left:2195px;top:745px;" width="36" height="32" viewBox="0 0 36 32"><path d="M3.9 13.3 L12.1 21.1 L27.8 5.7 V13.5 L12.1 28.6 L3.9 20.7 Z" fill="#18864b"/></svg>
<svg style="left:2200px;top:795px;" width="20" height="19" viewBox="0 0 20 19"><path d="M5.6 5.2 A7 7 0 1 1 4 10.5" fill="none" stroke="#b4b9be" stroke-width="1.9" stroke-linecap="round" stroke-linejoin="round"/><path d="M0.8 9.2 L4.2 12.4 L6.8 8.6 Z" fill="#b4b9be"/><path d="M11 6 V10.4 L13.6 12.4" fill="none" stroke="#b4b9be" stroke-width="1.6" stroke-linecap="round" stroke-linejoin="round"/></svg>
<span class="t s" style="left:2247.00px;top:590.00px;font-size:15px;line-height:21px;color:#0c0d0e;letter-spacing:0.398px;">As noted in </span>
<span class="t s" style="left:2331.00px;top:590.00px;font-size:15px;line-height:21px;color:#0a6cc4;letter-spacing:0.622px;text-decoration:underline;">the documentation</span>
<div style="left:2261.5px;top:627.5px;width:4px;height:69px;border-radius:2px;background:#c8ccd0"></div>
<span class="t s" style="left:2277.00px;top:641.00px;font-size:15px;line-height:21px;color:#3b4045;letter-spacing:0.482px;">Any primitive type from the list can be defined by an identifier in the form</span>
<div style="left:2798px;top:641px;width:67px;height:22px;border-radius:4px 0 0 4px;background:#e3e6e8"></div>
<span class="t m" style="left:2803.00px;top:643.00px;font-size:13px;line-height:19px;color:#0c0d0e;">CV_&lt;bit-</span>
<div style="left:2277px;top:664px;width:284.6px;height:22px;border-radius:0 4px 4px 0;background:#e3e6e8"></div>
<span class="t m" style="left:2277.00px;top:666.00px;font-size:13px;line-height:19px;color:#0c0d0e;">depth&gt;{U|S|F}C(&lt;number_of_channels&gt;)</span>
<span class="t s" style="left:2247.00px;top:715.00px;font-size:15px;line-height:21px;color:#0c0d0e;letter-spacing:0.339px;">where U is unsigned integer type, S is signed integer type, and F is float type.</span>
<span class="t s" style="left:2247.00px;top:753.00px;font-size:15px;line-height:21px;color:#0c0d0e;letter-spacing:0.079px;">so</span>
<div style="left:2267.5px;top:753.9px;width:62.2px;height:22px;border-radius:4px;background:#e3e6e8"></div>
<span class="t m" style="left:2272.50px;top:756.00px;font-size:13px;line-height:19px;color:#0c0d0e;">CV_8UC3</span>
<span class="t s" style="left:2334.00px;top:753.00px;font-size:15px;line-height:21px;color:#0c0d0e;letter-spacing:0.490px;">is an 8-bit unsigned integer matrix/image with 3 channels. Although it is most</span>
<span class="t s" style="left:2247.00px;top:776.00px;font-size:15px;line-height:21px;color:#0c0d0e;letter-spacing:0.345px;">common that this means an RGB (or actually BGR) image, it does not mandate it. It simply</span>
<span class="t s" style="left:2247.00px;top:798.00px;font-size:15px;line-height:21px;color:#0c0d0e;letter-spacing:0.422px;">means that there are three channels, and how you use them is up to you and your</span>
<span class="t s" style="left:2247.00px;top:821.00px;font-size:15px;line-height:21px;color:#0c0d0e;letter-spacing:0.509px;">application.</span>
<span class="t s" style="left:2247.00px;top:868.00px;font-size:13px;line-height:19px;color:#6a737c;letter-spacing:0.062px;">Share</span>
<span class="t s" style="left:2290.00px;top:868.00px;font-size:13px;line-height:19px;color:#6a737c;letter-spacing:0.430px;">Improve this answer</span>
<span class="t s" style="left:2423.00px;top:868.00px;font-size:13px;line-height:19px;color:#6a737c;letter-spacing:0.239px;">Follow</span>
<span class="t s" style="left:2708.00px;top:872.00px;font-size:12px;line-height:18px;color:#6a737c;letter-spacing:0.197px;">answered Nov 28, 2014 at 7:44</span>
<div style="left:2708.6px;top:892px;width:32px;height:32px;border-radius:4px;background:linear-gradient(100deg,#2e4a78 0 18%,#8fb6e0 18% 30%,#dfe8ef 30% 42%,#c79a78 42% 70%,#7d8fa8 70%);overflow:hidden"><div style="left:13px;top:8px;width:13px;height:16px;border-radius:7px;background:#d8a585"></div><div style="left:11px;top:5px;width:16px;height:8px;border-radius:6px 6px 0 0;background:#b98a52"></div></div>
<span class="t s" style="left:2748.00px;top:893.00px;font-size:13px;line-height:19px;color:#0a6cc4;letter-spacing:0.307px;">Hannes Ovrén</span>
<span class="t s" style="left:2748.00px;top:910.00px;font-size:12px;line-height:18px;color:#525960;letter-spacing:0.294px;font-weight:700;">21.5k</span>
<div style="left:2785.5px;top:916.5999999999999px;width:6px;height:6px;border-radius:3px;background:#ffcc01"></div>
<span class="t s" style="left:2794.50px;top:910.00px;font-size:12px;line-height:18px;color:#6a737c;letter-spacing:0.326px;">9</span>
<div style="left:2808.5px;top:916.5999999999999px;width:6px;height:6px;border-radius:3px;background:#b4b8bc"></div>
<span class="t s" style="left:2817.50px;top:910.00px;font-size:12px;line-height:18px;color:#6a737c;letter-spacing:0.076px;">67</span>
<div style="left:2838.5px;top:916.5999999999999px;width:6px;height:6px;border-radius:3px;background:#d1a684"></div>
<span class="t s" style="left:2847.50px;top:910.00px;font-size:12px;line-height:18px;color:#6a737c;letter-spacing:0.076px;">75</span>
<div style="left:2247px;top:946.5px;width:655px;height:1px;background:#e3e6e8;"></div>
<div style="left:2247px;top:997px;width:655px;height:1px;background:#e3e6e8;"></div>
<div style="left:2247px;top:1065.5px;width:655px;height:1px;background:#e3e6e8;"></div>
<div style="left:2247px;top:1132px;width:655px;height:1px;background:#e3e6e8;"></div>
<div style="left:2247px;top:1200.5px;width:655px;height:1px;background:#e3e6e8;"></div>
<div style="left:2247px;top:1249.5px;width:655px;height:1px;background:#e3e6e8;"></div>
<span class="t s" style="left:2250.00px;top:952.00px;font-size:13px;line-height:19px;color:#6a737c;">1</span>
<span class="t s" style="left:2271.00px;top:954.00px;font-size:13px;line-height:19px;color:#232629;letter-spacing:0.402px;">"it does not mandate it" - but I assume functions like</span>
<div style="left:2595px;top:952.7px;width:87.7px;height:20px;border-radius:4px;background:#e3e6e8"></div>
<span class="t m" style="left:2600.00px;top:954.00px;font-size:13px;line-height:19px;color:#0c0d0e;">cv::imread</span>
<span class="t s" style="left:2686.60px;top:954.00px;font-size:13px;line-height:19px;color:#232629;letter-spacing:0.226px;">will fill them with RGB values?</span>
<span class="t s" style="left:2271.00px;top:972.00px;font-size:13px;line-height:19px;color:#232629;">–</span>
<div style="left:2281px;top:971px;width:68.6px;height:20px;border-radius:3px;background:#edf5fd"></div>
<span class="t s" style="left:2286.50px;top:972.00px;font-size:13px;line-height:19px;color:#0a6cc4;letter-spacing:0.308px;">sashoalm</span>
<span class="t s" style="left:2353.40px;top:972.00px;font-size:13px;line-height:19px;color:#9199a1;letter-spacing:0.095px;">Nov 28, 2014 at 7:49</span>
<span class="t s" style="left:2250.00px;top:1003.00px;font-size:13px;line-height:19px;color:#6a737c;">1</span>
<span class="t s" style="left:2271.00px;top:1004.00px;font-size:13px;line-height:19px;color:#232629;letter-spacing:0.305px;">That depends on the flags passed to</span>
<div style="left:2496px;top:1003.3px;width:57.0px;height:20px;border-radius:4px;background:#e3e6e8"></div>
<span class="t m" style="left:2501.00px;top:1004.00px;font-size:13px;line-height:19px;color:#0c0d0e;">imread</span>
<span class="t s" style="left:2555.00px;top:1004.00px;font-size:13px;line-height:19px;color:#232629;letter-spacing:0.065px;">. But if you pass</span>
<div style="left:2652.7px;top:1003.3px;width:158.0px;height:20px;border-radius:4px;background:#e3e6e8"></div>
<span class="t m" style="left:2657.70px;top:1004.00px;font-size:13px;line-height:19px;color:#0c0d0e;">CV_LOAD_IMAGE_COLOR</span>
<span class="t s" style="left:2814.50px;top:1004.00px;font-size:13px;line-height:19px;color:#232629;letter-spacing:0.514px;">then the</span>
<span class="t s" style="left:2271.00px;top:1022.00px;font-size:13px;line-height:19px;color:#232629;letter-spacing:0.250px;">output should always be BGR, which is the color format OpenCV usually uses. –</span>
<span class="t s" style="left:2755.80px;top:1022.00px;font-size:13px;line-height:19px;color:#0a6cc4;letter-spacing:0.198px;">Hannes Ovrén</span>
<span class="t s" style="left:2846.00px;top:1022.00px;font-size:13px;line-height:19px;color:#9199a1;letter-spacing:0.100px;">Nov 28,</span>
<span class="t s" style="left:2271.00px;top:1041.00px;font-size:13px;line-height:19px;color:#9199a1;letter-spacing:0.201px;">2014 at 7:52</span>
<span class="t s" style="left:2248.50px;top:1071.00px;font-size:13px;line-height:19px;color:#6a737c;">3</span>
<span class="t s" style="left:2271.00px;top:1072.00px;font-size:13px;line-height:19px;color:#232629;letter-spacing:0.378px;">What I meant in my post was that just because a matrix/image has the type</span>
<div style="left:2735px;top:1071.3px;width:63.5px;height:20px;border-radius:4px;background:#e3e6e8"></div>
<span class="t m" style="left:2740.00px;top:1072.00px;font-size:13px;line-height:19px;color:#0c0d0e;">CV_8UC3</span>
<span class="t s" style="left:2802.50px;top:1072.00px;font-size:13px;line-height:19px;color:#232629;letter-spacing:0.403px;">does not</span>
<span class="t s" style="left:2271.00px;top:1090.00px;font-size:13px;line-height:19px;color:#232629;letter-spacing:0.328px;">necessarily mean it is BGR. It might just as well be HSV, or something that is not color information at</span>
<span class="t s" style="left:2271.00px;top:1109.00px;font-size:13px;line-height:19px;color:#232629;letter-spacing:0.007px;">all. –</span>
<span class="t s" style="left:2302.00px;top:1109.00px;font-size:13px;line-height:19px;color:#0a6cc4;letter-spacing:0.265px;">Hannes Ovrén</span>
<span class="t s" style="left:2392.70px;top:1109.00px;font-size:13px;line-height:19px;color:#9199a1;letter-spacing:0.130px;">Nov 28, 2014 at 7:53</span>
<span class="t s" style="left:2271.00px;top:1140.00px;font-size:13px;line-height:19px;color:#232629;letter-spacing:0.264px;">@HannesOvrén Exactly. It just defines the actual structure (i.e. bytes per pixel, how to access them,</span>
<span class="t s" style="left:2271.00px;top:1158.00px;font-size:13px;line-height:19px;color:#232629;letter-spacing:0.362px;">the actual stride etc.). It doesn't force you to interpret them in any specific way though (colors,</span>
<span class="t s" style="left:2271.00px;top:1176.00px;font-size:13px;line-height:19px;color:#232629;letter-spacing:0.161px;">multiple grayscale images, yuv, …). –</span>
<span class="t s" style="left:2496.00px;top:1176.00px;font-size:13px;line-height:19px;color:#0a6cc4;letter-spacing:0.499px;">Mario</span>
<span class="t s" style="left:2535.00px;top:1176.00px;font-size:13px;line-height:19px;color:#9199a1;letter-spacing:0.148px;">Nov 28, 2014 at 8:11</span>
<span class="t s" style="left:2271.00px;top:1207.00px;font-size:13px;line-height:19px;color:#232629;letter-spacing:0.298px;">@sashoalm: actually more complicated: C++ will fill them with RGB, but Python uses numpy, and will</span>
<span class="t s" style="left:2271.00px;top:1225.00px;font-size:13px;line-height:19px;color:#232629;letter-spacing:0.141px;">fill with BGR. –</span>
<span class="t s" style="left:2362.00px;top:1225.00px;font-size:13px;line-height:19px;color:#0a6cc4;letter-spacing:0.218px;">Michał Leon</span>
<span class="t s" style="left:2438.00px;top:1225.00px;font-size:13px;line-height:19px;color:#9199a1;letter-spacing:0.002px;">Jul 7, 2015 at 9:24</span>
<span class="t s" style="left:2250.00px;top:1260.00px;font-size:13px;line-height:19px;color:#9199a1;letter-spacing:0.458px;">Add a comment</span>
<div style="left:2190px;top:1293.5px;width:728px;height:1px;background:#e3e6e8;"></div>
<div style="left:2191px;top:1310px;width:40px;height:40px;border-radius:20px;border:1px solid #c3c8cc;background:#fff"></div>
<svg style="left:2202px;top:1323.5px;" width="18" height="13" viewBox="0 0 18 13"><path d="M2 10 L9 2.5 L16 10 Z" fill="#232629"/></svg>
<span class="t s" style="left:2247.00px;top:1312.00px;font-size:15px;line-height:21px;color:#0c0d0e;letter-spacing:0.411px;">The naming pattern depicts how the data is actually laid out in the PC memory and is not</span>
<div style="left:2942px;top:145px;width:38px;height:23px;border-radius:3px;background:#18864b"></div>
<span class="t s" style="left:2953.77px;top:148.00px;font-size:13px;line-height:19px;color:#fff;">38</span>
<span class="t s" style="left:2990.00px;top:142.00px;font-size:13px;line-height:19px;color:#0a6cc4;letter-spacing:0.314px;">In OpenCV, what's the difference</span>
<span class="t s" style="left:2990.00px;top:159.00px;font-size:13px;line-height:19px;color:#0a6cc4;letter-spacing:-0.167px;">between CV_8U and CV_8UC1?</span>
<div style="left:2942px;top:191px;width:38px;height:23px;border-radius:3px;background:#18864b"></div>
<span class="t s" style="left:2957.38px;top:194.00px;font-size:13px;line-height:19px;color:#fff;">1</span>
<span class="t s" style="left:2990.00px;top:188.00px;font-size:13px;line-height:19px;color:#0a6cc4;letter-spacing:0.301px;">What does this mean in Opencv</span>
<span class="t s" style="left:2990.00px;top:205.00px;font-size:13px;line-height:19px;color:#0a6cc4;letter-spacing:0.381px;">Documentation?</span>
<div style="left:2942px;top:236px;width:38px;height:23px;border-radius:3px;background:#18864b"></div>
<span class="t s" style="left:2957.38px;top:239.00px;font-size:13px;line-height:19px;color:#fff;">1</span>
<span class="t s" style="left:2990.00px;top:233.00px;font-size:13px;line-height:19px;color:#0a6cc4;letter-spacing:0.254px;">DataType&lt;cv::detail::deriv_type&gt;::depth</span>
<span class="t s" style="left:2990.00px;top:250.00px;font-size:13px;line-height:19px;color:#0a6cc4;letter-spacing:0.360px;">what is it used for</span>
<div style="left:2942px;top:282px;width:38px;height:23px;border-radius:3px;background:#18864b"></div>
<span class="t s" style="left:2957.38px;top:285.00px;font-size:13px;line-height:19px;color:#fff;">8</span>
<span class="t s" style="left:2990.00px;top:279.00px;font-size:13px;line-height:19px;color:#0a6cc4;letter-spacing:0.170px;">What does the cv::Scalar type mean?</span>
<div style="left:2942px;top:320px;width:38px;height:23px;border-radius:3px;background:#18864b"></div>
<span class="t s" style="left:2953.77px;top:323.00px;font-size:13px;line-height:19px;color:#fff;">23</span>
<span class="t s" style="left:2990.00px;top:317.00px;font-size:13px;line-height:19px;color:#0a6cc4;letter-spacing:0.165px;">What is the Vec3b type?</span>
<div style="left:2942px;top:359px;width:38px;height:23px;border-radius:3px;background:#18864b"></div>
<span class="t s" style="left:2954.25px;top:362.00px;font-size:13px;line-height:19px;color:#fff;">11</span>
<span class="t s" style="left:2990.00px;top:356.00px;font-size:13px;line-height:19px;color:#0a6cc4;letter-spacing:0.358px;">opencv clahe parameters explanation</span>
<div style="left:2942px;top:397px;width:38px;height:23px;border-radius:3px;background:#f1f2f3"></div>
<span class="t s" style="left:2953.77px;top:400.00px;font-size:13px;line-height:19px;color:#3b4045;">13</span>
<span class="t s" style="left:2990.00px;top:394.00px;font-size:13px;line-height:19px;color:#0a6cc4;letter-spacing:0.057px;">What is the purpose of CvType.CV_8UC4</span>
<div style="left:2942px;top:433px;width:38px;height:23px;border-radius:3px;background:#18864b"></div>
<span class="t s" style="left:2957.38px;top:436.00px;font-size:13px;line-height:19px;color:#fff;">0</span>
<span class="t s" style="left:2990.00px;top:430.00px;font-size:13px;line-height:19px;color:#0a6cc4;letter-spacing:0.298px;">C++ / Opencv Understanding the</span>
<span class="t s" style="left:2990.00px;top:447.00px;font-size:13px;line-height:19px;color:#0a6cc4;letter-spacing:0.363px;">datatype being used</span>
<div style="left:2942px;top:479px;width:38px;height:23px;border-radius:3px;background:#18864b"></div>
<span class="t s" style="left:2953.77px;top:482.00px;font-size:13px;line-height:19px;color:#fff;">10</span>
<span class="t s" style="left:2990.00px;top:476.00px;font-size:13px;line-height:19px;color:#0a6cc4;letter-spacing:-0.057px;">What does the TM_CCORR and</span>
<span class="t s" style="left:2990.00px;top:493.00px;font-size:13px;line-height:19px;color:#0a6cc4;letter-spacing:-0.203px;">TM_CCOEFF in opencv mean?</span>
<span class="t s" style="left:2942.00px;top:531.00px;font-size:19px;line-height:25px;color:#232629;letter-spacing:0.626px;">Hot Network Questions</span>
<div style="left:2943px;top:577.0px;width:13px;height:13px;border-radius:7px;background:radial-gradient(circle at 40% 35%,#b9a06a,#6f7f42)"></div>
<svg style="left:2942px;top:576.0px;" width="16" height="16" viewBox="0 0 16 16"><path d="M0.5 10.5 L15.5 5.5" stroke="#6aa05a" stroke-width="2"/></svg>
<span class="t s" style="left:2964.00px;top:572.00px;font-size:13px;line-height:19px;color:#0a6cc4;letter-spacing:-0.120px;">How to justify a racist empire's use of other</span>
<span class="t s" style="left:2964.00px;top:588.00px;font-size:13px;line-height:19px;color:#0a6cc4;letter-spacing:-0.276px;">sentient species as shock troops?</span>
<svg style="left:2942px;top:618.0px;" width="16" height="16" viewBox="0 0 16 16"><path d="M8 2.5 L11.5 9 H4.5 Z" fill="none" stroke="#3fa6a0" stroke-width="1.2" stroke-linecap="round" stroke-linejoin="round"/><ellipse cx="8" cy="11" rx="6.5" ry="2.8" fill="none" stroke="#3fa6a0" stroke-width="1.2" stroke-linecap="round" stroke-linejoin="round"/></svg>
<span class="t s" style="left:2964.00px;top:614.00px;font-size:13px;line-height:19px;color:#0a6cc4;letter-spacing:-0.151px;">Confusion about Circuits</span>
<svg style="left:2942px;top:646.0px;" width="16" height="17" viewBox="0 0 16 17"><path d="M1 1 H15 V12 H6.5 L4 15.5 V12 H1 Z" fill="#3f9fdc"/></svg>
<span class="t s" style="left:2948.01px;top:647.00px;font-size:6.5px;line-height:11px;color:#fff;font-weight:700;">L</span>
<span class="t s" style="left:2964.00px;top:642.00px;font-size:13px;line-height:19px;color:#0a6cc4;letter-spacing:-0.151px;">If everyone in the Senate is drunk, does that</span>
<span class="t s" style="left:2964.00px;top:658.00px;font-size:13px;line-height:19px;color:#0a6cc4;letter-spacing:-0.130px;">invalidate their actions?</span>
<div style="left:2943px;top:688.0px;width:14px;height:14px;border-radius:7px;background:radial-gradient(circle,#fff 0 22%,#d0121a 24% 100%)"></div>
<svg style="left:2942px;top:687.0px;" width="16" height="16" viewBox="0 0 16 16"><circle cx="14.2" cy="8.0" r="1.7" fill="#d0121a"/><circle cx="11.1" cy="13.4" r="1.7" fill="#d0121a"/><circle cx="4.9" cy="13.4" r="1.7" fill="#d0121a"/><circle cx="1.8" cy="8.0" r="1.7" fill="#d0121a"/><circle cx="4.9" cy="2.6" r="1.7" fill="#d0121a"/><circle cx="11.1" cy="2.6" r="1.7" fill="#d0121a"/></svg>
<span class="t s" style="left:2964.00px;top:683.00px;font-size:13px;line-height:19px;color:#0a6cc4;letter-spacing:-0.002px;">Extracting girth from the chromatic polynomial</span>
<svg style="left:2942px;top:715.0px;" width="16" height="16" viewBox="0 0 16 16"><circle cx="8" cy="8" r="6.8" fill="none" stroke="#4a4f55" stroke-width="1.3" stroke-linecap="round" stroke-linejoin="round"/><circle cx="5.5" cy="9.5" r="2" fill="none" stroke="#d33" stroke-width="1.1" stroke-linecap="round" stroke-linejoin="round"/><circle cx="10.5" cy="9.5" r="2" fill="none" stroke="#d33" stroke-width="1.1" stroke-linecap="round" stroke-linejoin="round"/><circle cx="8" cy="5.3" r="2" fill="none" stroke="#d33" stroke-width="1.1" stroke-linecap="round" stroke-linejoin="round"/></svg>
<span class="t s" style="left:2964.00px;top:711.00px;font-size:13px;line-height:19px;color:#0a6cc4;letter-spacing:-0.157px;">Forgotten Book Title - space sci-fi within solar</span>
<span class="t s" style="left:2964.00px;top:727.00px;font-size:13px;line-height:19px;color:#0a6cc4;letter-spacing:-0.362px;">system</span>
<svg style="left:2942px;top:756.0px;" width="16" height="16" viewBox="0 0 16 16"><circle cx="7.5" cy="7.5" r="6.3" fill="none" stroke="#23272b" stroke-width="1.8" stroke-linecap="round" stroke-linejoin="round"/><path d="M4.5 6 H10.5 M4.5 9 H8" stroke="#c33" stroke-width="1.5"/><path d="M11.5 12 L15 15.5" stroke="#23272b" stroke-width="2"/></svg>
<span class="t s" style="left:2964.00px;top:752.00px;font-size:13px;line-height:19px;color:#0a6cc4;letter-spacing:0.012px;">Program that brute forces to find the minimum</span>
<span class="t s" style="left:2964.00px;top:768.00px;font-size:13px;line-height:19px;color:#0a6cc4;letter-spacing:0.032px;">dominating set</span>
<div style="left:2942px;top:797.0px;width:16px;height:16px;border-radius:8px;background:#f0484e"></div>
<svg style="left:2942px;top:797.0px;" width="16" height="16" viewBox="0 0 16 16"><path d="M1 8.5 H15 M8 8.5 L4 14 M8 8.5 L12 14" stroke="#fff" stroke-width="1.4" fill="none"/></svg>
<span class="t s" style="left:2964.00px;top:793.00px;font-size:13px;line-height:19px;color:#0a6cc4;letter-spacing:-0.097px;">What's the rationale for requiring ATP</span>
<span class="t s" style="left:2964.00px;top:809.00px;font-size:13px;line-height:19px;color:#0a6cc4;letter-spacing:-0.224px;">applicants to be at least 23 years old?</span>
<div style="left:2942px;top:839.0px;width:16px;height:14px;background:#fbc33c"></div>
<div style="left:2945px;top:841.0px;width:2.5px;height:10px;background:#fff;"></div>
<div style="left:2949px;top:841.0px;width:2.5px;height:10px;background:#fff;"></div>
<div style="left:2953px;top:841.0px;width:2.5px;height:10px;background:#1c2340;"></div>
<span class="t s" style="left:2964.00px;top:834.00px;font-size:13px;line-height:19px;color:#0a6cc4;letter-spacing:-0.403px;">What happened to Jazz in 1980?</span>
<svg style="left:2942px;top:866.0px;" width="16" height="17" viewBox="0 0 16 17"><path d="M5 2 H2 V15 H5" fill="none" stroke="#111" stroke-width="1.8"/><path d="M10 2 C14 2 10 8.5 14.5 8.5 C10 8.5 14 15 10 15" fill="none" stroke="#2aa8e0" stroke-width="1.8"/><circle cx="7.5" cy="6" r="0.9" fill="#111"/><circle cx="7.5" cy="11" r="0.9" fill="#111"/></svg>
<span class="t s" style="left:2964.00px;top:862.00px;font-size:13px;line-height:19px;color:#0a6cc4;letter-spacing:-0.247px;">Could a low quality SSD enclosure prevent the</span>
<span class="t s" style="left:2964.00px;top:878.00px;font-size:13px;line-height:19px;color:#0a6cc4;letter-spacing:-0.349px;">TRIM functionality on my SSD?</span>
<div style="left:2942px;top:908.0px;width:16px;height:16px;border-radius:8px;background:#dd4814"></div>
<span class="t s" style="left:2944.16px;top:910.00px;font-size:7px;line-height:11px;color:#fff;font-weight:700;">ask</span>
<span class="t s" style="left:2964.00px;top:904.00px;font-size:13px;line-height:19px;color:#0a6cc4;letter-spacing:-0.033px;">Virtualbox 6 stopped working After kernel</span>
<span class="t s" style="left:2964.00px;top:920.00px;font-size:13px;line-height:19px;color:#0a6cc4;letter-spacing:-0.114px;">upgrade in Ubuntu 22.04</span>
<svg style="left:2942px;top:949.0px;" width="16" height="16" viewBox="0 0 16 16"><path d="M8 1.5 L15 8 L8 14.5 L1 8 Z" fill="none" stroke="#23303f" stroke-width="2"/><path d="M8 1.5 L1 8" stroke="#3fa9f5" stroke-width="2"/><path d="M8 14.5 L15 8" stroke="#e8543a" stroke-width="2"/></svg>
<span class="t s" style="left:2964.00px;top:945.00px;font-size:13px;line-height:19px;color:#0a6cc4;letter-spacing:-0.017px;">Should I push my fledgling programming work</span>
<span class="t s" style="left:2964.00px;top:961.00px;font-size:13px;line-height:19px;color:#0a6cc4;letter-spacing:-0.110px;">out of the development nest myself?</span>
<svg style="left:2942px;top:990.0px;" width="16" height="17" viewBox="0 0 16 17"><path d="M1 1 H15 V12 H6.5 L4 15.5 V12 H1 Z" fill="#4a9fd8"/></svg>
<span class="t s" style="left:2944.40px;top:991.00px;font-size:6.5px;line-height:11px;color:#fff;font-weight:700;">B H</span>
<span class="t s" style="left:2964.00px;top:986.00px;font-size:13px;line-height:19px;color:#0a6cc4;letter-spacing:-0.430px;">Why did Jacob bow 7 times to Esau? (Genesis</span>
<span class="t s" style="left:2964.00px;top:1002.00px;font-size:13px;line-height:19px;color:#0a6cc4;letter-spacing:-0.499px;">33:3-4)</span>
<div style="left:2943.0px;top:1034.0px;width:2px;height:11px;background:#b5c7cf;"></div>
<div style="left:2946.3px;top:1034.0px;width:2px;height:11px;background:#a8c6b0;"></div>
<div style="left:2949.6px;top:1034.0px;width:2px;height:11px;background:#9fb8c8;"></div>
<svg style="left:2942px;top:1031.0px;" width="16" height="16" viewBox="0 0 16 16"><path d="M11 3.5 L14.5 13.5" stroke="#d8604e" stroke-width="2"/></svg>
<span class="t s" style="left:2964.00px;top:1027.00px;font-size:13px;line-height:19px;color:#0a6cc4;letter-spacing:-0.060px;">Is It appropriate for students to express</span>
<span class="t s" style="left:2964.00px;top:1043.00px;font-size:13px;line-height:19px;color:#0a6cc4;letter-spacing:-0.093px;">interest in becoming a non-funded TA for a</span>
<span class="t s" style="left:2964.00px;top:1058.00px;font-size:13px;line-height:19px;color:#0a6cc4;letter-spacing:-0.363px;">specific course?</span>
<svg style="left:2942px;top:1088.0px;" width="16" height="16" viewBox="0 0 16 16"><circle cx="8" cy="8.5" r="5.5" fill="none" stroke="#e5352a" stroke-width="1.5" stroke-linecap="round" stroke-linejoin="round"/><path d="M11.5 1.5 L4.5 15 M5 7 L10 5.5 L6.5 10.5 L11 9.5" fill="none" stroke="#e5352a" stroke-width="1.3" stroke-linecap="round" stroke-linejoin="round"/></svg>
<span class="t s" style="left:2964.00px;top:1084.00px;font-size:13px;line-height:19px;color:#0a6cc4;letter-spacing:-0.114px;">How much power to drive this actuator?</span>
<div style="left:2943.0px;top:1119.0px;width:2px;height:11px;background:#b5c7cf;"></div>
<div style="left:2946.3px;top:1119.0px;width:2px;height:11px;background:#a8c6b0;"></div>
<div style="left:2949.6px;top:1119.0px;width:2px;height:11px;background:#9fb8c8;"></div>
<svg style="left:2942px;top:1116.0px;" width="16" height="16" viewBox="0 0 16 16"><path d="M11 3.5 L14.5 13.5" stroke="#d8604e" stroke-width="2"/></svg>
<span class="t s" style="left:2964.00px;top:1112.00px;font-size:13px;line-height:19px;color:#0a6cc4;letter-spacing:-0.172px;">Convention: Comma and period in an</span>
<span class="t s" style="left:2964.00px;top:1128.00px;font-size:13px;line-height:19px;color:#0a6cc4;letter-spacing:0.048px;">enumeration</span>
<div style="left:2942px;top:1157.0px;width:16px;height:16px;border-radius:8px;background:radial-gradient(circle,#f3e6c0 0 35%,#c9a773 36% 70%,#e7d3a4 71%)"></div>
<svg style="left:2942px;top:1157.0px;" width="16" height="16" viewBox="0 0 16 16"><path d="M8 4.5 L9.5 8 L8 11.5 L6.5 8 Z" fill="#3b4ca8"/><circle cx="8" cy="8" r="1" fill="#d33"/></svg>
<span class="t s" style="left:2964.00px;top:1153.00px;font-size:13px;line-height:19px;color:#0a6cc4;letter-spacing:-0.124px;">Use of automatically generated Python</span>
<span class="t s" style="left:2964.00px;top:1169.00px;font-size:13px;line-height:19px;color:#0a6cc4;letter-spacing:-0.104px;">procedure</span>
<svg style="left:2942px;top:1198.0px;" width="16" height="17" viewBox="0 0 16 17"><path d="M1 1 H15 V12 H6.5 L4 15.5 V12 H1 Z" fill="#4a9fd8"/></svg>
<span class="t s" style="left:2944.22px;top:1199.00px;font-size:6.5px;line-height:11px;color:#fff;font-weight:700;">O R</span>
<span class="t s" style="left:2964.00px;top:1194.00px;font-size:13px;line-height:19px;color:#0a6cc4;letter-spacing:0.013px;">Algorithm needed to find optimum area of</span>
<span class="t s" style="left:2964.00px;top:1210.00px;font-size:13px;line-height:19px;color:#0a6cc4;letter-spacing:-0.127px;">2-dimensional data set</span>
<svg style="left:2942px;top:1240.0px;" width="16" height="17" viewBox="0 0 16 17"><path d="M1 1 H15 V12 H6.5 L4 15.5 V12 H1 Z" fill="#3f9fdc"/></svg>
<span class="t s" style="left:2948.01px;top:1241.00px;font-size:6.5px;line-height:11px;color:#fff;font-weight:700;">L</span>
<span class="t s" style="left:2964.00px;top:1236.00px;font-size:13px;line-height:19px;color:#0a6cc4;letter-spacing:-0.002px;">Is it insider trading if I bought Boeing puts</span>
<span class="t s" style="left:2964.00px;top:1252.00px;font-size:13px;line-height:19px;color:#0a6cc4;letter-spacing:-0.151px;">while I am inside the wrecked airplane?</span>
<svg style="left:2942px;top:1281.0px;" width="16" height="17" viewBox="0 0 16 17"><path d="M1 1 H15 V12 H6.5 L4 15.5 V12 H1 Z" fill="#4a9fd8"/></svg>
<span class="t s" style="left:2945.85px;top:1282.00px;font-size:6.5px;line-height:11px;color:#fff;font-weight:700;">Po</span>
<span class="t s" style="left:2964.00px;top:1277.00px;font-size:13px;line-height:19px;color:#0a6cc4;letter-spacing:-0.171px;">Is there a reason why Liechtenstein is not a</span>
<span class="t s" style="left:2964.00px;top:1293.00px;font-size:13px;line-height:19px;color:#0a6cc4;letter-spacing:-0.173px;">member of the European Union?</span>
<div style="left:2942px;top:1323.0px;width:16px;height:14px;background:#fbc33c"></div>
<div style="left:2945px;top:1325.0px;width:2.5px;height:10px;background:#fff;"></div>
<div style="left:2949px;top:1325.0px;width:2.5px;height:10px;background:#fff;"></div>
<div style="left:2953px;top:1325.0px;width:2.5px;height:10px;background:#1c2340;"></div>
<span class="t s" style="left:2964.00px;top:1318.00px;font-size:13px;line-height:19px;color:#0a6cc4;letter-spacing:-0.192px;">Why does Musescore interpret Westergaard's</span>
<div style="left:1828px;top:1336px;width:1612px;height:64px;background:#f8f9f9;border-top:1px solid #d6d9dc;box-shadow:0 -1px 4px rgba(0,0,0,.1)"></div>
<span class="t s" style="left:2010.00px;top:1349.00px;font-size:15px;line-height:21px;color:#0c0d0e;letter-spacing:0.064px;font-weight:700;">Join Stack Overflow</span>
<span class="t s" style="left:2154.60px;top:1349.00px;font-size:15px;line-height:21px;color:#0c0d0e;letter-spacing:0.459px;"> to find the best answer to your technical question,</span>
<span class="t s" style="left:2010.00px;top:1368.00px;font-size:15px;line-height:21px;color:#0c0d0e;letter-spacing:0.433px;">help others answer theirs.</span>
<div style="left:2539px;top:1349px;width:136px;height:38px;border-radius:6px;background:#1b75d0"></div>
<span class="t s" style="left:2551.00px;top:1359.00px;font-size:13px;line-height:19px;color:#fff;letter-spacing:0.361px;">Sign up with email</span>
<div style="left:2683px;top:1349px;width:167px;height:38px;border-radius:6px;background:#fff;border:1px solid #d6d9dc"></div>
<svg style="left:2694.5px;top:1360px;" width="16" height="16" viewBox="0 0 16 16"><path d="M15.2 8.2 c0-.5 0-1-.1-1.4 H8 v2.8 h4 c-.2 1-.7 1.7-1.5 2.3 v1.9 h2.4 c1.5-1.3 2.3-3.3 2.3-5.600z" fill="#4285f4"/><path d="M8 15.5 c2 0 3.7-.7 4.9-1.8 l-2.4-1.9 c-.7.5-1.5.7-2.5.7-1.9 0-3.6-1.3-4.1-3.1 H1.4 v1.9 C2.6 13.8 5.1 15.5 8 15.500z" fill="#34a853"/><path d="M3.9 9.4 c-.3-.9-.3-1.9 0-2.8 V4.7 H1.4 c-1 2-1 4.6 0 6.600z" fill="#fbbc05"/><path d="M8 3.5 c1.1 0 2 .4 2.8 1.1 l2.1-2.1 C11.6 1.2 9.9.5 8 .5 5.1.5 2.6 2.2 1.4 4.7 l2.5 1.9 C4.4 4.8 6.1 3.5 8 3.500z" fill="#ea4335"/></svg>
<span class="t s" style="left:2715.70px;top:1359.00px;font-size:13px;line-height:19px;color:#3b4045;letter-spacing:0.297px;">Sign up with Google</span>
<div style="left:2858px;top:1349px;width:166px;height:38px;border-radius:6px;background:#0c0d0e"></div>
<svg style="left:2870px;top:1360px;" width="16" height="16" viewBox="0 0 16 16"><path d="M8 .7 a7.5 7.5 0 0 0 -2.4 14.6 c.4.1.5-.2.5-.4 v-1.3 c-2.1.5-2.5-1-2.5-1 -.3-.9-.8-1.1-.8-1.1 -.7-.5.1-.5.1-.5 .7.1 1.1.8 1.1.8 .7 1.1 1.8.8 2.2.6 .100-.5.3-.8.5-1 -1.7-.2-3.4-.8-3.4-3.7 0-.8.3-1.5.8-2 -.1-.2-.3-1 .1-2 0 0 .6-.2 2.1.8 a7.2 7.2 0 0 1 3.8 0 c1.4-1 2.1-.8 2.1-.8 .4 1 .2 1.8.1 2 .5.5.8 1.2.8 2 0 2.9-1.8 3.5-3.4 3.7 .3.2.5.7.5 1.4 v2.1 c0 .2.1.5.5.4 A7.5 7.5 0 0 0 8 .7z" fill="#fff"/></svg>
<span class="t s" style="left:2890.70px;top:1359.00px;font-size:13px;line-height:19px;color:#fff;letter-spacing:0.337px;">Sign up with GitHub</span>
<div style="left:3032px;top:1349px;width:182px;height:38px;border-radius:6px;background:#385499"></div>
<div style="left:3044px;top:1360px;width:16px;height:16px;border-radius:2px;background:#fff"></div>
<span class="t s" style="left:3050.00px;top:1358.00px;font-size:15px;line-height:21px;color:#385499;font-weight:700;">f</span>
<span class="t s" style="left:3065.00px;top:1359.00px;font-size:13px;line-height:19px;color:#fff;letter-spacing:0.261px;">Sign up with Facebook</span>
<svg style="left:3232.0px;top:1360.0px;" width="16" height="16" viewBox="0 0 16 16"><path d="M4 4 L12 12 M12 4 L4 12" fill="none" stroke="#232629" stroke-width="1.9" stroke-linecap="round" stroke-linejoin="round"/></svg>
<div style="left:1828px;top:0;width:44px;height:1400px;background:linear-gradient(90deg,rgba(0,0,0,.46),rgba(0,0,0,.27) 18%,rgba(0,0,0,.13) 38%,rgba(0,0,0,.04) 68%,rgba(0,0,0,0))"></div>
<div style="left:0px;top:0px;width:1828px;height:28px;background:#31363b;"></div>
<div style="left:0px;top:28px;width:1828px;height:25px;background:#1b1e20;"></div>
<div style="left:0px;top:53px;width:1828px;height:1325px;background:#181818;"></div>
<svg style="left:6.0px;top:6.0px;" width="16" height="16" viewBox="0 0 16 16"><path d="M4 4 L12 12 M12 4 L4 12" fill="none" stroke="#fcfcfc" stroke-width="1.2" stroke-linecap="round" stroke-linejoin="round"/></svg>
<svg style="left:30.0px;top:6.0px;" width="16" height="16" viewBox="0 0 16 16"><path d="M3.5 10 L8 5.5 L12.5 10" fill="none" stroke="#fcfcfc" stroke-width="1.2" stroke-linecap="round" stroke-linejoin="round"/></svg>
<svg style="left:54.0px;top:6.0px;" width="16" height="16" viewBox="0 0 16 16"><path d="M3.5 6 L8 10.5 L12.5 6" fill="none" stroke="#fcfcfc" stroke-width="1.2" stroke-linecap="round" stroke-linejoin="round"/></svg>
<span class="t s" style="left:777.00px;top:5.00px;font-size:13.33px;line-height:19px;color:#fcfcfc;letter-spacing:0.027px;">main.cpp - WaylandCaptureTests - VSCodium</span>
<svg style="left:1781px;top:6px;" width="16" height="16" viewBox="0 0 16 16"><path d="M9.5 2 L14 6.5 L12.6 7.2 L10.6 9.2 L10.2 12 L4 5.8 L6.8 5.4 L8.8 3.4 Z M6.6 9.4 L2.5 13.5" fill="#fcfcfc" stroke="#fcfcfc" stroke-width="1" stroke-linejoin="round"/></svg>
<div style="left:1803.5px;top:4.5px;width:19px;height:19px;border-radius:10px;background:#f1f4f9"></div>
<svg style="left:1805px;top:6px;" width="16" height="16" viewBox="0 0 24 24"><path d="M12 21 C12 17 11.5 15.5 10 13.5 C8.5 11.5 8.2 9.5 8.4 6 M10 13.5 C8 12.8 5.8 12.8 4.4 10.8 M5.6 12 C5.6 10 5.2 8.8 4.6 7.6 M12 17.5 C13 14.5 15.5 13.5 16 10 C16.2 8 15.8 6.5 15.6 4.8 M15.8 11.5 C17.5 11 19.2 10.8 19.8 8.4 M12.2 12 C12.4 10 12 8.6 11.8 7.4" fill="none" stroke="#3b78d8" stroke-width="2.3" stroke-linecap="round"/></svg>
<span class="t s" style="left:6.20px;top:31.00px;font-size:13.33px;line-height:19px;color:#fcfcfc;letter-spacing:-0.420px;">File</span>
<span class="t s" style="left:38.40px;top:31.00px;font-size:13.33px;line-height:19px;color:#fcfcfc;letter-spacing:-0.167px;">Edit</span>
<span class="t s" style="left:73.30px;top:31.00px;font-size:13.33px;line-height:19px;color:#fcfcfc;letter-spacing:-0.160px;">Selection</span>
<span class="t s" style="left:139.00px;top:31.00px;font-size:13.33px;line-height:19px;color:#fcfcfc;letter-spacing:-0.163px;">View</span>
<span class="t s" style="left:179.30px;top:31.00px;font-size:13.33px;line-height:19px;color:#fcfcfc;letter-spacing:-0.791px;">Go</span>
<span class="t s" style="left:208.40px;top:31.00px;font-size:13.33px;line-height:19px;color:#fcfcfc;letter-spacing:-0.451px;">Run</span>
<span class="t s" style="left:244.30px;top:31.00px;font-size:13.33px;line-height:19px;color:#fcfcfc;letter-spacing:0.029px;">Terminal</span>
<span class="t s" style="left:307.50px;top:31.00px;font-size:13.33px;line-height:19px;color:#fcfcfc;letter-spacing:-0.079px;">Help</span>
<div style="left:47px;top:53px;width:1px;height:1325px;background:#2b2b2b;"></div>
<svg style="left:9px;top:62px;" width="30" height="30" viewBox="0 0 24 24"><path d="M9.5 3.5 H16 L20.5 8 V17.5 H9.5 Z M16 3.5 V8 H20.5" fill="none" stroke="#868686" stroke-width="1.25" stroke-linecap="round" stroke-linejoin="round"/><path d="M9.5 7.5 H4.5 V21 H14.5 V17.5" fill="none" stroke="#868686" stroke-width="1.25" stroke-linecap="round" stroke-linejoin="round"/></svg>
<svg style="left:9px;top:110px;" width="30" height="30" viewBox="0 0 24 24"><circle cx="14.5" cy="9.5" r="5.6" fill="none" stroke="#868686" stroke-width="1.25" stroke-linecap="round" stroke-linejoin="round"/><path d="M10.4 13.6 L3.5 20.5" fill="none" stroke="#868686" stroke-width="1.25" stroke-linecap="round" stroke-linejoin="round"/></svg>
<svg style="left:9px;top:158px;" width="30" height="30" viewBox="0 0 24 24"><circle cx="7" cy="5" r="2.4" fill="none" stroke="#868686" stroke-width="1.25" stroke-linecap="round" stroke-linejoin="round"/><circle cx="7" cy="19" r="2.4" fill="none" stroke="#868686" stroke-width="1.25" stroke-linecap="round" stroke-linejoin="round"/><circle cx="17" cy="8" r="2.4" fill="none" stroke="#868686" stroke-width="1.25" stroke-linecap="round" stroke-linejoin="round"/><path d="M7 7.4 V16.6 M17 10.4 C17 14 7 13 7 16.6" fill="none" stroke="#868686" stroke-width="1.25" stroke-linecap="round" stroke-linejoin="round"/></svg>
<div style="left:0px;top:198px;width:2px;height:48px;background:#0078d4;"></div>
<svg style="left:9px;top:206px;" width="30" height="30" viewBox="0 0 24 24"><path d="M9 3 L21 11 L12.5 16.6" fill="none" stroke="#d7d7d7" stroke-width="1.25" stroke-linecap="round" stroke-linejoin="round"/><path d="M9 3 V9.5" fill="none" stroke="#d7d7d7" stroke-width="1.25" stroke-linecap="round" stroke-linejoin="round"/><ellipse cx="7.5" cy="16" rx="3.2" ry="4" fill="none" stroke="#d7d7d7" stroke-width="1.25" stroke-linecap="round" stroke-linejoin="round"/><path d="M2.2 16 H4.3 M10.7 16 H12.8 M3 11.8 L5 13.3 M12 11.8 L10 13.3 M3 20.6 L5 18.9 M12 20.6 L10 18.9 M5.6 12.8 C5.6 10.6 9.4 10.6 9.4 12.8" fill="none" stroke="#d7d7d7" stroke-width="1.25" stroke-linecap="round" stroke-linejoin="round"/></svg>
<svg style="left:9px;top:255px;" width="30" height="30" viewBox="0 0 24 24"><path d="M3.5 8.5 H11 V16 H3.5 Z M11 16 H18.5 V21 H3.5 V16 M11 16 V21" fill="none" stroke="#868686" stroke-width="1.25" stroke-linecap="round" stroke-linejoin="round"/><rect x="14" y="3" width="6.5" height="6.5" fill="none" stroke="#868686" stroke-width="1.25" stroke-linecap="round" stroke-linejoin="round"/></svg>
<svg style="left:9px;top:303px;" width="30" height="30" viewBox="0 0 24 24"><path d="M9.5 3.5 H14.5 M10.5 3.5 V9.5 L4.5 20.5 H19.5 L13.5 9.5 V3.5 M7.2 15.5 H16.8" fill="none" stroke="#868686" stroke-width="1.25" stroke-linecap="round" stroke-linejoin="round"/></svg>
<svg style="left:9px;top:351px;" width="30" height="30" viewBox="0 0 24 24"><path d="M12 3 L3 20.5 H13.5 M12 3 L16.5 12 M12 3 L10.5 14.5 L3 20.5 M10.5 14.5 L14.5 17" fill="none" stroke="#868686" stroke-width="1.25" stroke-linecap="round" stroke-linejoin="round"/><path d="M15 20 L19.5 15.5 M19 12.8 A2.6 2.6 0 1 0 21.6 15.6 L20 15.4 L19.2 14.4 Z" fill="none" stroke="#868686" stroke-width="1.25" stroke-linecap="round" stroke-linejoin="round"/></svg>
<svg style="left:9px;top:1291.5px;" width="30" height="30" viewBox="0 0 24 24"><circle cx="12" cy="12" r="9.3" fill="none" stroke="#868686" stroke-width="1.25" stroke-linecap="round" stroke-linejoin="round"/><circle cx="12" cy="9.3" r="3.3" fill="none" stroke="#868686" stroke-width="1.25" stroke-linecap="round" stroke-linejoin="round"/><path d="M5.6 18.6 C7 14.2 17 14.2 18.4 18.6" fill="none" stroke="#868686" stroke-width="1.25" stroke-linecap="round" stroke-linejoin="round"/></svg>
<svg style="left:10px;top:1340px;" width="28" height="28" viewBox="0 0 16 16"><path d="M7.35 1.43 L8.65 1.43 L9.45 3.22 L10.36 3.59 L12.19 2.90 L13.10 3.81 L12.41 5.64 L12.78 6.55 L14.57 7.35 L14.57 8.65 L12.78 9.45 L12.41 10.36 L13.10 12.19 L12.19 13.10 L10.36 12.41 L9.45 12.78 L8.65 14.57 L7.35 14.57 L6.55 12.78 L5.64 12.41 L3.81 13.10 L2.90 12.19 L3.59 10.36 L3.22 9.45 L1.43 8.65 L1.43 7.35 L3.22 6.55 L3.59 5.64 L2.90 3.81 L3.81 2.90 L5.64 3.59 L6.55 3.22Z" fill="none" stroke="#868686" stroke-width="0.8" stroke-linecap="round" stroke-linejoin="round"/><circle cx="8" cy="8" r="2.1" fill="none" stroke="#868686" stroke-width="0.8" stroke-linecap="round" stroke-linejoin="round"/></svg>
<div style="left:24px;top:173px;width:16px;height:16px;border-radius:8px;background:#0078d4"></div>
<span class="t s" style="left:29.50px;top:174.00px;font-size:9px;line-height:14px;color:#fff;font-weight:700;">3</span>
<div style="left:24px;top:221px;width:16px;height:16px;border-radius:8px;background:#0078d4"></div>
<span class="t s" style="left:29.50px;top:222.00px;font-size:9px;line-height:14px;color:#fff;font-weight:700;">1</span>
<div style="left:347px;top:53px;width:1px;height:1325px;background:#2b2b2b;"></div>
<span class="t s" style="left:68.30px;top:63.00px;font-size:11px;line-height:16px;color:#ccc;letter-spacing:-0.191px;">RUN AND DEBUG</span>
<div style="left:163px;top:59px;width:120px;height:23px;background:#313131;border:1px solid #3c3c3c;border-radius:2px"></div>
<div style="left:184px;top:60px;width:1px;height:21px;background:#3c3c3c;"></div>
<svg style="left:167.0px;top:63.0px;" width="15" height="15" viewBox="0 0 16 16"><path d="M4.5 2.8 L12.8 8 L4.5 13.2 Z" fill="none" stroke="#89d185" stroke-width="1.5" stroke-linecap="round" stroke-linejoin="round"/></svg>
<span class="t s" style="left:190.50px;top:62.00px;font-size:13px;line-height:19px;color:#ccc;letter-spacing:-0.035px;">(gdb) Launc</span>
<div style="left:256px;top:60px;width:8px;height:21px;background:linear-gradient(90deg,rgba(49,49,49,0),#313131)"></div>
<svg style="left:260.5px;top:63.5px;" width="15" height="15" viewBox="0 0 16 16"><path d="M3.5 6 L8 10.5 L12.5 6" fill="none" stroke="#ccc" stroke-width="1.2" stroke-linecap="round" stroke-linejoin="round"/></svg>
<svg style="left:289.5px;top:62.5px;" width="17" height="17" viewBox="0 0 16 16"><path d="M7.35 1.43 L8.65 1.43 L9.45 3.22 L10.36 3.59 L12.19 2.90 L13.10 3.81 L12.41 5.64 L12.78 6.55 L14.57 7.35 L14.57 8.65 L12.78 9.45 L12.41 10.36 L13.10 12.19 L12.19 13.10 L10.36 12.41 L9.45 12.78 L8.65 14.57 L7.35 14.57 L6.55 12.78 L5.64 12.41 L3.81 13.10 L2.90 12.19 L3.59 10.36 L3.22 9.45 L1.43 8.65 L1.43 7.35 L3.22 6.55 L3.59 5.64 L2.90 3.81 L3.81 2.90 L5.64 3.59 L6.55 3.22Z" fill="none" stroke="#ccc" stroke-width="1.0" stroke-linecap="round" stroke-linejoin="round"/><circle cx="8" cy="8" r="2.1" fill="none" stroke="#ccc" stroke-width="1.0" stroke-linecap="round" stroke-linejoin="round"/></svg>
<svg style="left:316.0px;top:63.0px;" width="16" height="16" viewBox="0 0 16 16"><circle cx="3.5" cy="8" r="1.1" fill="#ccc"/><circle cx="8" cy="8" r="1.1" fill="#ccc"/><circle cx="12.5" cy="8" r="1.1" fill="#ccc"/></svg>
<svg style="left:51.0px;top:92.0px;" width="14" height="14" viewBox="0 0 16 16"><path d="M3.5 6 L8 10.5 L12.5 6" fill="none" stroke="#ccc" stroke-width="1.3" stroke-linecap="round" stroke-linejoin="round"/></svg>
<span class="t s" style="left:68.00px;top:91.00px;font-size:11px;line-height:16px;color:#ccc;letter-spacing:-0.416px;font-weight:700;">VARIABLES</span>
<div style="left:48px;top:604px;width:299px;height:1px;background:#2b2b2b;"></div>
<svg style="left:51.0px;top:609.5px;" width="14" height="14" viewBox="0 0 16 16"><path d="M3.5 6 L8 10.5 L12.5 6" fill="none" stroke="#ccc" stroke-width="1.3" stroke-linecap="round" stroke-linejoin="round"/></svg>
<span class="t s" style="left:68.00px;top:609.00px;font-size:11px;line-height:16px;color:#ccc;letter-spacing:-0.202px;font-weight:700;">WATCH</span>
<span class="t m" style="left:78.00px;top:629.00px;font-size:13px;line-height:19px;color:#c586c0;">userdata:</span>
<span class="t m" style="left:155.00px;top:629.00px;font-size:13px;line-height:19px;color:#9b9b9b;font-style:italic;">not available</span>
<div style="left:48px;top:969px;width:299px;height:1px;background:#2b2b2b;"></div>
<svg style="left:51.0px;top:974.0px;" width="14" height="14" viewBox="0 0 16 16"><path d="M3.5 6 L8 10.5 L12.5 6" fill="none" stroke="#ccc" stroke-width="1.3" stroke-linecap="round" stroke-linejoin="round"/></svg>
<span class="t s" style="left:68.00px;top:973.00px;font-size:11px;line-height:16px;color:#ccc;letter-spacing:-0.526px;font-weight:700;">CALL STACK</span>
<span class="t s" style="left:298.00px;top:974.00px;font-size:10px;line-height:15px;color:#ccc;letter-spacing:-0.506px;font-weight:700;">Running</span>
<span class="t s" style="left:78.00px;top:993.00px;font-size:13px;line-height:19px;color:#ccc;letter-spacing:0.281px;">WaylandCaptureT [16141]</span>
<div style="left:282px;top:992.5px;width:55px;height:17px;background:#333;border-radius:2px"></div>
<span class="t s" style="left:285.50px;top:994.00px;font-size:11px;line-height:16px;color:#c5c5c5;letter-spacing:-0.405px;">RUNNING</span>
<span class="t s" style="left:78.00px;top:1015.00px;font-size:13px;line-height:19px;color:#ccc;letter-spacing:0.281px;">WaylandCaptureT [16145]</span>
<div style="left:282px;top:1014.5px;width:55px;height:17px;background:#333;border-radius:2px"></div>
<span class="t s" style="left:285.50px;top:1016.00px;font-size:11px;line-height:16px;color:#c5c5c5;letter-spacing:-0.405px;">RUNNING</span>
<span class="t s" style="left:78.00px;top:1037.00px;font-size:13px;line-height:19px;color:#ccc;letter-spacing:0.281px;">WaylandCaptureT [16146]</span>
<div style="left:282px;top:1036.5px;width:55px;height:17px;background:#333;border-radius:2px"></div>
<span class="t s" style="left:285.50px;top:1038.00px;font-size:11px;line-height:16px;color:#c5c5c5;letter-spacing:-0.405px;">RUNNING</span>
<span class="t s" style="left:78.00px;top:1059.00px;font-size:13px;line-height:19px;color:#ccc;letter-spacing:0.431px;">gmain [16147]</span>
<div style="left:282px;top:1058.5px;width:55px;height:17px;background:#333;border-radius:2px"></div>
<span class="t s" style="left:285.50px;top:1060.00px;font-size:11px;line-height:16px;color:#c5c5c5;letter-spacing:-0.405px;">RUNNING</span>
<span class="t s" style="left:78.00px;top:1081.00px;font-size:13px;line-height:19px;color:#ccc;letter-spacing:0.281px;">WaylandCaptureT [16148]</span>
<div style="left:282px;top:1080.5px;width:55px;height:17px;background:#333;border-radius:2px"></div>
<span class="t s" style="left:285.50px;top:1082.00px;font-size:11px;line-height:16px;color:#c5c5c5;letter-spacing:-0.405px;">RUNNING</span>
<div style="left:48px;top:1312px;width:299px;height:1px;background:#2b2b2b;"></div>
<svg style="left:51.0px;top:1316.8px;" width="14" height="14" viewBox="0 0 16 16"><path d="M3.5 6 L8 10.5 L12.5 6" fill="none" stroke="#ccc" stroke-width="1.3" stroke-linecap="round" stroke-linejoin="round"/></svg>
<span class="t s" style="left:68.00px;top:1316.00px;font-size:11px;line-height:16px;color:#ccc;letter-spacing:-0.278px;font-weight:700;">BREAKPOINTS</span>
<div style="left:73px;top:1339px;width:12px;height:12px;background:#fff;border-radius:2px;border:1px solid #cfcfcf"></div>
<span class="t s" style="left:89.00px;top:1336.00px;font-size:13px;line-height:19px;color:#ccc;letter-spacing:0.009px;">All C++ Exceptions</span>
<div style="left:55.7px;top:1363px;width:8.6px;height:8.6px;border-radius:5px;background:#e51400"></div>
<div style="left:73px;top:1361px;width:12px;height:12px;background:#0a74e8;border-radius:2px"></div>
<svg style="left:73px;top:1361px;" width="12" height="12" viewBox="0 0 12 12"><path d="M2.6 6.3 L5 8.6 L9.6 3.4" fill="none" stroke="#fff" stroke-width="1.7" stroke-linecap="round" stroke-linejoin="round"/></svg>
<span class="t s" style="left:89.00px;top:1358.00px;font-size:13px;line-height:19px;color:#ccc;letter-spacing:0.406px;">main.cpp</span>
<div style="left:316px;top:1359px;width:21px;height:17px;border-radius:9px;background:#3c3c3c"></div>
<span class="t s" style="left:320.38px;top:1360.00px;font-size:11px;line-height:16px;color:#ccc;">81</span>
<div style="left:348px;top:53px;width:901px;height:35px;background:#181818;"></div>
<div style="left:348px;top:87px;width:901px;height:1px;background:#2b2b2b;"></div>
<div style="left:348px;top:53px;width:146px;height:35px;background:#1f1f1f;"></div>
<div style="left:348px;top:53px;width:146px;height:1px;background:#0078d4;"></div>
<div style="left:494px;top:53px;width:1px;height:35px;background:#2b2b2b;"></div>
<svg style="left:354.0px;top:63.0px;" width="16" height="16" viewBox="0 0 16 16"><path d="M4 4 L12 12 M12 4 L4 12" fill="none" stroke="#ccc" stroke-width="1.1" stroke-linecap="round" stroke-linejoin="round"/></svg>
<svg style="left:380.2px;top:64px;" width="12" height="12" viewBox="0 0 16 16"><path d="M11.2 4.6 A5 5 0 1 0 11.2 11.4" fill="none" stroke="#519aba" stroke-width="3"/><path d="M9.2 8 H12.8 M11 6.2 V9.8 M13 8 H16 M14.5 6.5 V9.5" stroke="#519aba" stroke-width="1.3" fill="none"/></svg>
<span class="t s" style="left:398.00px;top:61.00px;font-size:13px;line-height:19px;color:#f88070;letter-spacing:0.406px;">main.cpp</span>
<span class="t s" style="left:459.50px;top:61.00px;font-size:13px;line-height:19px;color:#f88070;letter-spacing:-0.446px;">7, M</span>
<svg style="left:1073px;top:62px;" width="18" height="18" viewBox="0 0 16 16"><path d="M5 2 L14 8 L7.5 12.3" fill="none" stroke="#ccc" stroke-width="1.1" stroke-linecap="round" stroke-linejoin="round"/><path d="M5 2 V7" fill="none" stroke="#ccc" stroke-width="1.1" stroke-linecap="round" stroke-linejoin="round"/><ellipse cx="4.2" cy="11.3" rx="2" ry="2.5" fill="none" stroke="#ccc" stroke-width="0.9900000000000001" stroke-linecap="round" stroke-linejoin="round"/><path d="M1 11.3 H2.2 M6.2 11.3 H7.4 M1.6 8.6 L2.7 9.5 M6.8 8.6 L5.7 9.5 M1.6 14 L2.7 13.1 M6.8 14 L5.7 13.1" fill="none" stroke="#ccc" stroke-width="0.9900000000000001" stroke-linecap="round" stroke-linejoin="round"/></svg>
<svg style="left:1093.5px;top:66.5px;" width="11" height="11" viewBox="0 0 16 16"><path d="M3.5 6 L8 10.5 L12.5 6" fill="none" stroke="#ccc" stroke-width="1.5" stroke-linecap="round" stroke-linejoin="round"/></svg>
<svg style="left:1113.0px;top:62.5px;" width="17" height="17" viewBox="0 0 16 16"><path d="M7.35 1.43 L8.65 1.43 L9.45 3.22 L10.36 3.59 L12.19 2.90 L13.10 3.81 L12.41 5.64 L12.78 6.55 L14.57 7.35 L14.57 8.65 L12.78 9.45 L12.41 10.36 L13.10 12.19 L12.19 13.10 L10.36 12.41 L9.45 12.78 L8.65 14.57 L7.35 14.57 L6.55 12.78 L5.64 12.41 L3.81 13.10 L2.90 12.19 L3.59 10.36 L3.22 9.45 L1.43 8.65 L1.43 7.35 L3.22 6.55 L3.59 5.64 L2.90 3.81 L3.81 2.90 L5.64 3.59 L6.55 3.22Z" fill="none" stroke="#ccc" stroke-width="1.0" stroke-linecap="round" stroke-linejoin="round"/><circle cx="8" cy="8" r="2.1" fill="none" stroke="#ccc" stroke-width="1.0" stroke-linecap="round" stroke-linejoin="round"/></svg>
<svg style="left:1139px;top:62.5px;" width="16" height="16" viewBox="0 0 16 16"><path d="M2.5 6.8 V13.6 H13.5 V6.8" fill="none" stroke="#ccc" stroke-width="1.05" stroke-linecap="round" stroke-linejoin="round"/><path d="M8 1.2 V6.2 M6.2 4.4 L8 6.2 L9.8 4.4" fill="none" stroke="#ccc" stroke-width="1.05" stroke-linecap="round" stroke-linejoin="round"/><rect x="6.2" y="8" width="1.5" height="1.5" fill="#ccc"/><rect x="9" y="8" width="1.5" height="1.5" fill="#ccc"/><rect x="4.8" y="10.6" width="1.5" height="1.5" fill="#ccc"/><rect x="7.6" y="10.6" width="1.5" height="1.5" fill="#ccc"/><rect x="10.4" y="10.6" width="1.5" height="1.5" fill="#ccc"/></svg>
<svg style="left:1166px;top:63px;" width="16" height="16" viewBox="0 0 16 16"><circle cx="3.8" cy="3.4" r="1.7" fill="none" stroke="#ccc" stroke-width="1" stroke-linecap="round" stroke-linejoin="round"/><circle cx="12.2" cy="12.6" r="1.7" fill="none" stroke="#ccc" stroke-width="1" stroke-linecap="round" stroke-linejoin="round"/><path d="M3.8 5.1 V10.6 C3.8 12 4.6 12.6 6 12.6 H9.2 M7.8 11 L9.4 12.6 L7.8 14.2" fill="none" stroke="#ccc" stroke-width="1" stroke-linecap="round" stroke-linejoin="round"/><path d="M12.2 10.9 V5.4 C12.2 4 11.4 3.4 10 3.4 H7 M8.4 1.8 L6.8 3.4 L8.4 5" fill="none" stroke="#ccc" stroke-width="1" stroke-linecap="round" stroke-linejoin="round"/></svg>
<svg style="left:1192.0px;top:63.0px;" width="16" height="16" viewBox="0 0 16 16"><rect x="2" y="2.5" width="12" height="11" rx="1" fill="none" stroke="#ccc" stroke-width="1.1" stroke-linecap="round" stroke-linejoin="round"/><path d="M8 2.5 V13.5" fill="none" stroke="#ccc" stroke-width="1.1" stroke-linecap="round" stroke-linejoin="round"/></svg>
<svg style="left:1218.0px;top:63.0px;" width="16" height="16" viewBox="0 0 16 16"><circle cx="3.5" cy="8" r="1.1" fill="#ccc"/><circle cx="8" cy="8" r="1.1" fill="#ccc"/><circle cx="12.5" cy="8" r="1.1" fill="#ccc"/></svg>
<div style="left:348px;top:88px;width:901px;height:22px;background:#1f1f1f;"></div>
<div style="left:348px;top:110px;width:901px;height:939px;background:#1f1f1f;"></div>
<svg style="left:368.2px;top:93px;" width="12" height="12" viewBox="0 0 16 16"><path d="M11.2 4.6 A5 5 0 1 0 11.2 11.4" fill="none" stroke="#519aba" stroke-width="3"/><path d="M9.2 8 H12.8 M11 6.2 V9.8 M13 8 H16 M14.5 6.5 V9.5" stroke="#519aba" stroke-width="1.3" fill="none"/></svg>
<span class="t s" style="left:386.00px;top:90.00px;font-size:13px;line-height:19px;color:#a9a9a9;letter-spacing:0.406px;">main.cpp</span>
<svg style="left:444.5px;top:93.5px;" width="13" height="13" viewBox="0 0 16 16"><path d="M6 3.5 L10.5 8 L6 12.5" fill="none" stroke="#a9a9a9" stroke-width="1.3" stroke-linecap="round" stroke-linejoin="round"/></svg>
<svg style="left:458.5px;top:91.3px;" width="15" height="15" viewBox="0 0 15 15"><path d="M7 1.5 L12.3 4.2 V9.8 L7 12.5 L1.7 9.8 V4.2 Z M1.7 4.2 L7 7 L12.3 4.2 M7 7 V12.5" fill="none" stroke="#b180d7" stroke-width="1.1" stroke-linejoin="round"/></svg>
<span class="t s" style="left:478.00px;top:90.00px;font-size:13px;line-height:19px;color:#a9a9a9;letter-spacing:0.229px;">on_process(void *)</span>
<div style="left:348px;top:110px;width:901px;height:939px;overflow:hidden">
<div style="left:70px;top:524px;width:817px;height:19px;border-top:2px solid #282828;border-bottom:2px solid #282828"></div>
<div style="left:70.0px;top:68px;width:1px;height:513px;background:#707070"></div>
<div style="left:70.0px;top:676px;width:1px;height:19px;background:#404040"></div>
<div style="left:70.0px;top:809px;width:1px;height:152px;background:#404040"></div>
<div style="left:86.9px;top:182px;width:1px;height:38px;background:#404040"></div>
<div style="left:86.9px;top:296px;width:1px;height:19px;background:#404040"></div>
<div style="left:49px;top:125px;width:3px;height:19px;background:repeating-linear-gradient(-45deg,#0a7ad6 0 1.4px,#0b4f8c 1.4px 2.8px)"></div>
<div style="left:49px;top:163px;width:3px;height:57px;background:repeating-linear-gradient(-45deg,#0a7ad6 0 1.4px,#0b4f8c 1.4px 2.8px)"></div>
<div style="left:49px;top:258px;width:3px;height:57px;background:repeating-linear-gradient(-45deg,#0a7ad6 0 1.4px,#0b4f8c 1.4px 2.8px)"></div>
<div style="left:49px;top:353px;width:3px;height:190px;background:repeating-linear-gradient(-45deg,#0a7ad6 0 1.4px,#0b4f8c 1.4px 2.8px)"></div>
<div style="left:49px;top:562px;width:3px;height:19px;background:repeating-linear-gradient(-45deg,#0a7ad6 0 1.4px,#0b4f8c 1.4px 2.8px)"></div>
<div style="left:49px;top:315px;width:3px;height:19px;background:#2ea043"></div>
<div style="left:5.699999999999989px;top:567px;width:8.6px;height:8.6px;border-radius:5px;background:#e51400"></div>
<div style="left:179.6px;top:524px;width:8.4px;height:19px;background:#2d2d2d;border:1px solid #888"></div>
<div style="left:516.7px;top:524px;width:8.4px;height:19px;background:#2d2d2d;border:1px solid #888"></div>
<div style="left:466.1px;top:524px;width:8.4px;height:19px;background:#aeafad"></div>
<span class="t m" style="left:27.14px;top:-7.64px;font-size:14px;line-height:19px;color:#6e7681;">51</span>
<span class="t m" style="left:27.14px;top:11.36px;font-size:14px;line-height:19px;color:#6e7681;">52</span>
<span class="t m" style="left:27.14px;top:30.36px;font-size:14px;line-height:19px;color:#6e7681;">53</span>
<span class="t m" style="left:70.00px;top:30.36px;font-size:14px;line-height:19px;color:#d4d4d4;"><span style="color:#569cd6">static</span><span style="color:#3e3e3e">·</span><span style="color:#569cd6">void</span><span style="color:#3e3e3e">·</span><span style="color:#dcdcaa">on_process</span><span style="color:#ffd700">(</span><span style="color:#569cd6">void</span><span style="color:#3e3e3e">·</span><span style="color:#569cd6">*</span><span style="color:#9cdcfe">userdata</span><span style="color:#ffd700">)</span></span>
<span class="t m" style="left:27.14px;top:49.36px;font-size:14px;line-height:19px;color:#6e7681;">54</span>
<span class="t m" style="left:70.00px;top:49.36px;font-size:14px;line-height:19px;color:#d4d4d4;"><span style="color:#ffd700">{</span></span>
<span class="t m" style="left:27.14px;top:68.36px;font-size:14px;line-height:19px;color:#6e7681;">55</span>
<span class="t m" style="left:70.00px;top:68.36px;font-size:14px;line-height:19px;color:#d4d4d4;"><span style="color:#3e3e3e">·</span><span style="color:#3e3e3e">·</span><span style="color:#4ec9b0">std</span><span style="color:#d4d4d4">::</span><span style="color:#9cdcfe">cout</span><span style="color:#3e3e3e">·</span><span style="color:#d4d4d4">&lt;&lt;</span><span style="color:#3e3e3e">·</span><span style="color:#ce9178">"Processing</span><span style="color:#3e3e3e">·</span><span style="color:#ce9178">stuff</span><span style="color:#3e3e3e">·</span><span style="color:#ce9178">!"</span><span style="color:#3e3e3e">·</span><span style="color:#d4d4d4">&lt;&lt;</span><span style="color:#3e3e3e">·</span><span style="color:#4ec9b0">std</span><span style="color:#d4d4d4">::</span><span style="color:#dcdcaa">endl</span><span style="color:#d4d4d4">;</span></span>
<span class="t m" style="left:27.14px;top:87.36px;font-size:14px;line-height:19px;color:#6e7681;">56</span>
<span class="t m" style="left:27.14px;top:106.36px;font-size:14px;line-height:19px;color:#6e7681;">57</span>
<span class="t m" style="left:70.00px;top:106.36px;font-size:14px;line-height:19px;color:#d4d4d4;"><span style="color:#3e3e3e">·</span><span style="color:#3e3e3e">·</span><span style="color:#4ec9b0">ObsPw</span><span style="color:#d4d4d4">*</span><span style="color:#3e3e3e">·</span><span style="color:#9cdcfe">pw</span><span style="color:#3e3e3e">·</span><span style="color:#d4d4d4">=</span><span style="color:#3e3e3e">·</span><span style="color:#569cd6">static_cast</span><span style="color:#d4d4d4">&lt;</span><span style="color:#4ec9b0">ObsPw</span><span style="color:#d4d4d4">*&gt;</span><span style="color:#da70d6">(</span><span style="color:#9cdcfe">userdata</span><span style="color:#da70d6">)</span><span style="color:#d4d4d4">;</span></span>
<span class="t m" style="left:27.14px;top:125.36px;font-size:14px;line-height:19px;color:#6e7681;">58</span>
<span class="t m" style="left:70.00px;top:125.36px;font-size:14px;line-height:19px;color:#d4d4d4;"><span style="color:#3e3e3e">·</span><span style="color:#3e3e3e">·</span><span style="color:#569cd6">struct</span><span style="color:#3e3e3e">·</span><span style="color:#4ec9b0">pw_buffer</span><span style="color:#3e3e3e">·</span><span style="color:#569cd6">*</span><span style="color:#9cdcfe">pwBuffer</span><span style="color:#d4d4d4">;</span></span>
<span class="t m" style="left:27.14px;top:144.36px;font-size:14px;line-height:19px;color:#6e7681;">59</span>
<span class="t m" style="left:27.14px;top:163.36px;font-size:14px;line-height:19px;color:#6e7681;">60</span>
<span class="t m" style="left:70.00px;top:163.36px;font-size:14px;line-height:19px;color:#d4d4d4;"><span style="color:#3e3e3e">·</span><span style="color:#3e3e3e">·</span><span style="color:#c586c0">if</span><span style="color:#3e3e3e">·</span><span style="color:#da70d6">(</span><span style="color:#179fff">(</span><span style="color:#9cdcfe">pwBuffer</span><span style="color:#3e3e3e">·</span><span style="color:#d4d4d4">=</span><span style="color:#3e3e3e">·</span><span style="color:#dcdcaa">pw_stream_dequeue_buffer</span><span style="color:#ffd700">(</span><span style="color:#9cdcfe">pw</span><span style="color:#d4d4d4">-&gt;</span><span style="color:#9cdcfe">stream</span><span style="color:#ffd700">)</span><span style="color:#179fff">)</span><span style="color:#3e3e3e">·</span><span style="color:#d4d4d4">==</span><span style="color:#3e3e3e">·</span><span style="color:#569cd6">NULL</span><span style="color:#da70d6">)</span><span style="color:#3e3e3e">·</span><span style="color:#da70d6">{</span></span>
<span class="t m" style="left:27.14px;top:182.36px;font-size:14px;line-height:19px;color:#6e7681;">61</span>
<span class="t m" style="left:70.00px;top:182.36px;font-size:14px;line-height:19px;color:#d4d4d4;"><span style="color:#3e3e3e">·</span><span style="color:#3e3e3e">·</span><span style="color:#3e3e3e">·</span><span style="color:#3e3e3e">·</span><span style="color:#dcdcaa">pw_log_warn</span><span style="color:#179fff">(</span><span style="color:#ce9178">"out</span><span style="color:#3e3e3e">·</span><span style="color:#ce9178">of</span><span style="color:#3e3e3e">·</span><span style="color:#ce9178">buffers:</span><span style="color:#3e3e3e">·</span><span style="color:#ce9178">%m"</span><span style="color:#179fff">)</span><span style="color:#d4d4d4">;</span></span>
<span class="t m" style="left:27.14px;top:201.36px;font-size:14px;line-height:19px;color:#6e7681;">62</span>
<span class="t m" style="left:70.00px;top:201.36px;font-size:14px;line-height:19px;color:#d4d4d4;"><span style="color:#3e3e3e">·</span><span style="color:#3e3e3e">·</span><span style="color:#3e3e3e">·</span><span style="color:#3e3e3e">·</span><span style="color:#c586c0">return</span><span style="color:#d4d4d4">;</span></span>
<span class="t m" style="left:27.14px;top:220.36px;font-size:14px;line-height:19px;color:#6e7681;">63</span>
<span class="t m" style="left:70.00px;top:220.36px;font-size:14px;line-height:19px;color:#d4d4d4;"><span style="color:#3e3e3e">·</span><span style="color:#3e3e3e">·</span><span style="color:#da70d6">}</span></span>
<span class="t m" style="left:27.14px;top:239.36px;font-size:14px;line-height:19px;color:#6e7681;">64</span>
<span class="t m" style="left:27.14px;top:258.36px;font-size:14px;line-height:19px;color:#6e7681;">65</span>
<span class="t m" style="left:70.00px;top:258.36px;font-size:14px;line-height:19px;color:#d4d4d4;"><span style="color:#3e3e3e">·</span><span style="color:#3e3e3e">·</span><span style="color:#d4d4d4">spa_buffer</span><span style="color:#3e3e3e">·</span><span style="color:#d4d4d4">*</span><span style="color:#9cdcfe">spaBuffer</span><span style="color:#3e3e3e">·</span><span style="color:#d4d4d4">=</span><span style="color:#3e3e3e">·</span><span style="color:#9cdcfe">pwBuffer</span><span style="color:#d4d4d4">-&gt;</span><span style="color:#9cdcfe">buffer</span><span style="color:#d4d4d4">;</span></span>
<span class="t m" style="left:27.14px;top:277.36px;font-size:14px;line-height:19px;color:#6e7681;">66</span>
<span class="t m" style="left:70.00px;top:277.36px;font-size:14px;line-height:19px;color:#d4d4d4;"><span style="color:#3e3e3e">·</span><span style="color:#3e3e3e">·</span><span style="color:#c586c0">if</span><span style="color:#3e3e3e">·</span><span style="color:#da70d6">(</span><span style="color:#9cdcfe">spaBuffer</span><span style="color:#d4d4d4">-&gt;</span><span style="color:#9cdcfe">datas</span><span style="color:#179fff">[</span><span style="color:#b5cea8">0</span><span style="color:#179fff">]</span><span style="color:#d4d4d4">.</span><span style="color:#9cdcfe">data</span><span style="color:#3e3e3e">·</span><span style="color:#d4d4d4">==</span><span style="color:#3e3e3e">·</span><span style="color:#569cd6">NULL</span><span style="color:#da70d6">)</span><span style="color:#da70d6">{</span></span>
<span class="t m" style="left:27.14px;top:296.36px;font-size:14px;line-height:19px;color:#6e7681;">67</span>
<span class="t m" style="left:70.00px;top:296.36px;font-size:14px;line-height:19px;color:#d4d4d4;"><span style="color:#3e3e3e">·</span><span style="color:#3e3e3e">·</span><span style="color:#3e3e3e">·</span><span style="color:#3e3e3e">·</span><span style="color:#c586c0">return</span><span style="color:#d4d4d4">;</span></span>
<span class="t m" style="left:27.14px;top:315.36px;font-size:14px;line-height:19px;color:#6e7681;">68</span>
<span class="t m" style="left:70.00px;top:315.36px;font-size:14px;line-height:19px;color:#d4d4d4;"><span style="color:#3e3e3e">·</span><span style="color:#3e3e3e">·</span><span style="color:#da70d6">}</span></span>
<span class="t m" style="left:27.14px;top:334.36px;font-size:14px;line-height:19px;color:#6e7681;">69</span>
<span class="t m" style="left:27.14px;top:353.36px;font-size:14px;line-height:19px;color:#6e7681;">70</span>
<span class="t m" style="left:70.00px;top:353.36px;font-size:14px;line-height:19px;color:#d4d4d4;"><span style="color:#3e3e3e">·</span><span style="color:#3e3e3e">·</span><span style="color:#dcdcaa">printf</span><span style="color:#da70d6">(</span><span style="color:#ce9178">"got</span><span style="color:#3e3e3e">·</span><span style="color:#ce9178">a</span><span style="color:#3e3e3e">·</span><span style="color:#ce9178">frame</span><span style="color:#3e3e3e">·</span><span style="color:#ce9178">of</span><span style="color:#3e3e3e">·</span><span style="color:#ce9178">size</span><span style="color:#3e3e3e">·</span><span style="color:#9cdcfe">%d</span><span style="color:#d7ba7d">\n</span><span style="color:#ce9178">"</span><span style="color:#d4d4d4">,</span><span style="color:#3e3e3e">·</span><span style="color:#9cdcfe">spaBuffer</span><span style="color:#d4d4d4">-&gt;</span><span style="color:#9cdcfe">datas</span><span style="color:#179fff">[</span><span style="color:#b5cea8">0</span><span style="color:#179fff">]</span><span style="color:#d4d4d4">.</span><span style="color:#9cdcfe">chunk</span><span style="color:#d4d4d4">-&gt;</span><span style="color:#9cdcfe">size</span><span style="color:#da70d6">)</span><span style="color:#d4d4d4">;</span></span>
<span class="t m" style="left:27.14px;top:372.36px;font-size:14px;line-height:19px;color:#6e7681;">71</span>
<span class="t m" style="left:27.14px;top:391.36px;font-size:14px;line-height:19px;color:#6e7681;">72</span>
<span class="t m" style="left:27.14px;top:410.36px;font-size:14px;line-height:19px;color:#6e7681;">73</span>
<span class="t m" style="left:70.00px;top:410.36px;font-size:14px;line-height:19px;color:#d4d4d4;"><span style="color:#3e3e3e">·</span><span style="color:#3e3e3e">·</span><span style="color:#569cd6">unsigned</span><span style="color:#3e3e3e">·</span><span style="color:#9cdcfe">width</span><span style="color:#3e3e3e">·</span><span style="color:#d4d4d4">=</span><span style="color:#3e3e3e">·</span><span style="color:#b5cea8">3440</span><span style="color:#d4d4d4">;</span></span>
<span class="t m" style="left:27.14px;top:429.36px;font-size:14px;line-height:19px;color:#6e7681;">74</span>
<span class="t m" style="left:70.00px;top:429.36px;font-size:14px;line-height:19px;color:#d4d4d4;"><span style="color:#3e3e3e">·</span><span style="color:#3e3e3e">·</span><span style="color:#569cd6">unsigned</span><span style="color:#3e3e3e">·</span><span style="color:#9cdcfe">height</span><span style="color:#3e3e3e">·</span><span style="color:#d4d4d4">=</span><span style="color:#3e3e3e">·</span><span style="color:#b5cea8">1440</span><span style="color:#d4d4d4">;</span></span>
<span class="t m" style="left:27.14px;top:448.36px;font-size:14px;line-height:19px;color:#6e7681;">75</span>
<span class="t m" style="left:27.14px;top:467.36px;font-size:14px;line-height:19px;color:#6e7681;">76</span>
<span class="t m" style="left:70.00px;top:467.36px;font-size:14px;line-height:19px;color:#d4d4d4;"><span style="color:#3e3e3e">·</span><span style="color:#3e3e3e">·</span><span style="color:#4ec9b0">cv</span><span style="color:#d4d4d4">::Mat</span><span style="color:#3e3e3e">·</span><span style="color:#dcdcaa">rgbaFrame</span><span style="color:#da70d6">(</span><span style="color:#d4d4d4">height,</span><span style="color:#3e3e3e">·</span><span style="color:#d4d4d4">width,</span><span style="color:#3e3e3e">·</span><span style="color:#d4d4d4">CV_8UC4,</span><span style="color:#3e3e3e">·</span><span style="color:#9cdcfe">spaBuffer</span><span style="color:#d4d4d4">-&gt;</span><span style="color:#9cdcfe">datas</span><span style="color:#179fff">[</span><span style="color:#b5cea8">0</span><span style="color:#179fff">]</span><span style="color:#d4d4d4">.</span><span style="color:#9cdcfe">data</span><span style="color:#da70d6">)</span><span style="color:#d4d4d4">;</span></span>
<span class="t m" style="left:27.14px;top:486.36px;font-size:14px;line-height:19px;color:#6e7681;">77</span>
<span class="t m" style="left:70.00px;top:486.36px;font-size:14px;line-height:19px;color:#d4d4d4;"><span style="color:#3e3e3e">·</span><span style="color:#3e3e3e">·</span><span style="color:#4ec9b0">cv</span><span style="color:#d4d4d4">::</span><span style="color:#dcdcaa">cvtColor</span><span style="color:#da70d6">(</span><span style="color:#d4d4d4">rgbaFrame,</span><span style="color:#3e3e3e">·</span><span style="color:#d4d4d4">rgbaFrame,</span><span style="color:#3e3e3e">·</span><span style="color:#4ec9b0">cv</span><span style="color:#d4d4d4">::COLOR_RGBA2RGB</span><span style="color:#da70d6">)</span><span style="color:#d4d4d4">;</span></span>
<span class="t m" style="left:27.14px;top:505.36px;font-size:14px;line-height:19px;color:#6e7681;">78</span>
<span class="t m" style="left:27.14px;top:524.36px;font-size:14px;line-height:19px;color:#ccc;">79</span>
<span class="t m" style="left:70.00px;top:524.36px;font-size:14px;line-height:19px;color:#d4d4d4;"><span style="color:#3e3e3e">·</span><span style="color:#3e3e3e">·</span><span style="color:#4ec9b0">cv</span><span style="color:#d4d4d4">::</span><span style="color:#dcdcaa">imwrite</span><span style="color:#da70d6">(</span><span style="color:#ce9178">"out.PLEASEPLEASEPLEASE.png"</span><span style="color:#d4d4d4">,</span><span style="color:#3e3e3e">·</span><span style="color:#d4d4d4">rgbaFrame</span><span style="color:#da70d6">)</span><span style="color:#d4d4d4">;</span></span>
<span class="t m" style="left:27.14px;top:543.36px;font-size:14px;line-height:19px;color:#6e7681;">80</span>
<span class="t m" style="left:27.14px;top:562.36px;font-size:14px;line-height:19px;color:#6e7681;">81</span>
<span class="t m" style="left:70.00px;top:562.36px;font-size:14px;line-height:19px;color:#d4d4d4;"><span style="color:#3e3e3e">·</span><span style="color:#3e3e3e">·</span><span style="color:#dcdcaa">pw_stream_queue_buffer</span><span style="color:#da70d6">(</span><span style="color:#9cdcfe">pw</span><span style="color:#d4d4d4">-&gt;</span><span style="color:#9cdcfe">stream</span><span style="color:#d4d4d4">,</span><span style="color:#3e3e3e">·</span><span style="color:#9cdcfe">pwBuffer</span><span style="color:#da70d6">)</span><span style="color:#d4d4d4">;</span></span>
<span class="t m" style="left:27.14px;top:581.36px;font-size:14px;line-height:19px;color:#6e7681;">82</span>
<span class="t m" style="left:70.00px;top:581.36px;font-size:14px;line-height:19px;color:#d4d4d4;"><span style="color:#ffd700">}</span></span>
<span class="t m" style="left:27.14px;top:600.36px;font-size:14px;line-height:19px;color:#6e7681;">83</span>
<span class="t m" style="left:27.14px;top:619.36px;font-size:14px;line-height:19px;color:#6e7681;">84</span>
<span class="t m" style="left:27.14px;top:638.36px;font-size:14px;line-height:19px;color:#6e7681;">85</span>
<span class="t m" style="left:70.00px;top:638.36px;font-size:14px;line-height:19px;color:#d4d4d4;"><span style="color:#569cd6">static</span><span style="color:#3e3e3e">·</span><span style="color:#569cd6">void</span><span style="color:#3e3e3e">·</span><span style="color:#dcdcaa">on_param_changed</span><span style="color:#ffd700">(</span><span style="color:#569cd6">void</span><span style="color:#3e3e3e">·</span><span style="color:#569cd6">*</span><span style="color:#9cdcfe">userdata</span><span style="color:#d4d4d4">,</span><span style="color:#3e3e3e">·</span><span style="color:#4ec9b0">uint32_t</span><span style="color:#3e3e3e">·</span><span style="color:#9cdcfe">id</span><span style="color:#d4d4d4">,</span><span style="color:#3e3e3e">·</span><span style="color:#569cd6">const</span><span style="color:#3e3e3e">·</span><span style="color:#569cd6">struct</span><span style="color:#3e3e3e">·</span><span style="color:#4ec9b0">spa_pod</span><span style="color:#3e3e3e">·</span><span style="color:#569cd6">*</span><span style="color:#9cdcfe">param</span><span style="color:#ffd700">)</span></span>
<span class="t m" style="left:27.14px;top:657.36px;font-size:14px;line-height:19px;color:#6e7681;">86</span>
<span class="t m" style="left:70.00px;top:657.36px;font-size:14px;line-height:19px;color:#d4d4d4;"><span style="color:#ffd700">{</span></span>
<span class="t m" style="left:27.14px;top:676.36px;font-size:14px;line-height:19px;color:#6e7681;">87</span>
<span class="t m" style="left:70.00px;top:676.36px;font-size:14px;line-height:19px;color:#d4d4d4;"><span style="color:#3e3e3e">·</span><span style="color:#3e3e3e">·</span><span style="color:#4ec9b0">std</span><span style="color:#d4d4d4">::</span><span style="color:#9cdcfe">cout</span><span style="color:#3e3e3e">·</span><span style="color:#d4d4d4">&lt;&lt;</span><span style="color:#3e3e3e">·</span><span style="color:#ce9178">"Params</span><span style="color:#3e3e3e">·</span><span style="color:#ce9178">changed</span><span style="color:#3e3e3e">·</span><span style="color:#ce9178">!"</span><span style="color:#3e3e3e">·</span><span style="color:#d4d4d4">&lt;&lt;</span><span style="color:#3e3e3e">·</span><span style="color:#4ec9b0">std</span><span style="color:#d4d4d4">::</span><span style="color:#dcdcaa">endl</span><span style="color:#d4d4d4">;</span></span>
<span class="t m" style="left:27.14px;top:695.36px;font-size:14px;line-height:19px;color:#6e7681;">88</span>
<span class="t m" style="left:70.00px;top:695.36px;font-size:14px;line-height:19px;color:#d4d4d4;"><span style="color:#ffd700">}</span></span>
<span class="t m" style="left:27.14px;top:714.36px;font-size:14px;line-height:19px;color:#6e7681;">89</span>
<span class="t m" style="left:27.14px;top:733.36px;font-size:14px;line-height:19px;color:#6e7681;">90</span>
<span class="t m" style="left:27.14px;top:752.36px;font-size:14px;line-height:19px;color:#6e7681;">91</span>
<span class="t m" style="left:27.14px;top:771.36px;font-size:14px;line-height:19px;color:#6e7681;">92</span>
<span class="t m" style="left:70.00px;top:771.36px;font-size:14px;line-height:19px;color:#d4d4d4;"><span style="color:#569cd6">void</span><span style="color:#3e3e3e">·</span><span style="color:#dcdcaa">initCapture</span><span style="color:#ffd700">(</span><span style="color:#4ec9b0">screencast_portal_capture*</span><span style="color:#3e3e3e">·</span><span style="color:#9cdcfe">capture</span><span style="color:#ffd700">)</span></span>
<span class="t m" style="left:27.14px;top:790.36px;font-size:14px;line-height:19px;color:#6e7681;">93</span>
<span class="t m" style="left:70.00px;top:790.36px;font-size:14px;line-height:19px;color:#d4d4d4;"><span style="color:#ffd700">{</span></span>
<span class="t m" style="left:27.14px;top:809.36px;font-size:14px;line-height:19px;color:#6e7681;">94</span>
<span class="t m" style="left:70.00px;top:809.36px;font-size:14px;line-height:19px;color:#d4d4d4;"><span style="color:#3e3e3e">·</span><span style="color:#3e3e3e">·</span><span style="color:#dcdcaa">pw_init</span><span style="color:#da70d6">(</span><span style="color:#569cd6">NULL</span><span style="color:#d4d4d4">,</span><span style="color:#3e3e3e">·</span><span style="color:#569cd6">NULL</span><span style="color:#da70d6">)</span><span style="color:#d4d4d4">;</span></span>
<span class="t m" style="left:27.14px;top:828.36px;font-size:14px;line-height:19px;color:#6e7681;">95</span>
<span class="t m" style="left:70.00px;top:828.36px;font-size:14px;line-height:19px;color:#d4d4d4;"><span style="color:#3e3e3e">·</span><span style="color:#3e3e3e">·</span><span style="color:#dcdcaa">screencast_portal_desktop_capture_create</span><span style="color:#da70d6">(</span><span style="color:#9cdcfe">capture</span><span style="color:#d4d4d4">,</span><span style="color:#3e3e3e">·</span><span style="color:#4fc1ff">PORTAL_CAPTURE_TYPE_MONITOR</span><span style="color:#d4d4d4">,</span><span style="color:#3e3e3e">·</span><span style="color:#569cd6">true</span><span style="color:#da70d6">)</span><span style="color:#d4d4d4">;</span></span>
<span class="t m" style="left:27.14px;top:847.36px;font-size:14px;line-height:19px;color:#6e7681;">96</span>
<span class="t m" style="left:70.00px;top:847.36px;font-size:14px;line-height:19px;color:#d4d4d4;"><span style="color:#3e3e3e">·</span><span style="color:#3e3e3e">·</span><span style="color:#dcdcaa">signal</span><span style="color:#da70d6">(</span><span style="color:#569cd6">SIGINT</span><span style="color:#d4d4d4">,</span><span style="color:#3e3e3e">·</span><span style="color:#dcdcaa">sigint_handler</span><span style="color:#da70d6">)</span><span style="color:#d4d4d4">;</span></span>
<span class="t m" style="left:27.14px;top:866.36px;font-size:14px;line-height:19px;color:#6e7681;">97</span>
<span class="t m" style="left:27.14px;top:885.36px;font-size:14px;line-height:19px;color:#6e7681;">98</span>
<span class="t m" style="left:70.00px;top:885.36px;font-size:14px;line-height:19px;color:#d4d4d4;"><span style="color:#3e3e3e">·</span><span style="color:#3e3e3e">·</span><span style="color:#4ec9b0">std</span><span style="color:#d4d4d4">::</span><span style="color:#9cdcfe">cout</span><span style="color:#3e3e3e">·</span><span style="color:#d4d4d4">&lt;&lt;</span><span style="color:#3e3e3e">·</span><span style="color:#ce9178">"Reaching</span><span style="color:#3e3e3e">·</span><span style="color:#ce9178">while"</span><span style="color:#3e3e3e">·</span><span style="color:#d4d4d4">&lt;&lt;</span><span style="color:#3e3e3e">·</span><span style="color:#4ec9b0">std</span><span style="color:#d4d4d4">::</span><span style="color:#dcdcaa">endl</span><span style="color:#d4d4d4">;</span></span>
<span class="t m" style="left:27.14px;top:904.36px;font-size:14px;line-height:19px;color:#6e7681;">99</span>
<span class="t m" style="left:18.71px;top:923.36px;font-size:14px;line-height:19px;color:#6e7681;">100</span>
<span class="t m" style="left:70.00px;top:923.36px;font-size:14px;line-height:19px;color:#d4d4d4;"><span style="color:#3e3e3e">·</span><span style="color:#3e3e3e">·</span><span style="color:#c586c0">while</span><span style="color:#3e3e3e">·</span><span style="color:#da70d6">(</span><span style="color:#b5cea8">1</span><span style="color:#da70d6">)</span><span style="color:#da70d6">{</span></span>
<span class="t m" style="left:18.71px;top:942.36px;font-size:14px;line-height:19px;color:#6e7681;">101</span>
<span class="t m" style="left:466.15px;top:524.36px;font-size:14px;line-height:19px;color:#666;">a</span>
<div style="left:0;top:0;width:901px;height:6px;background:linear-gradient(180deg,rgba(0,0,0,.55),rgba(0,0,0,0))"></div>
</div>
<div style="left:1235px;top:110px;width:1px;height:939px;background:#111;"></div>
<div style="left:1245px;top:121px;width:4px;height:6px;background:#c4161a;"></div>
<div style="left:1245px;top:130px;width:4px;height:13px;background:#c4161a;"></div>
<div style="left:1245px;top:145px;width:4px;height:6px;background:#c4161a;"></div>
<div style="left:1236px;top:146px;width:4px;height:7px;background:#2d7a3a;"></div>
<div style="left:1236px;top:171px;width:4px;height:6px;background:#2d7a3a;"></div>
<div style="left:1236px;top:302px;width:4px;height:6px;background:#0d5c9c;"></div>
<div style="left:1236px;top:310px;width:4px;height:10px;background:#0d5c9c;"></div>
<div style="left:1236px;top:327px;width:4px;height:9px;background:#0d5c9c;"></div>
<div style="left:1236px;top:336px;width:4px;height:6px;background:#2d7a3a;"></div>
<div style="left:1236px;top:344px;width:4px;height:33px;background:#0d5c9c;"></div>
<div style="left:1236px;top:379px;width:4px;height:6px;background:#0d5c9c;"></div>
<div style="left:1236px;top:373px;width:13px;height:2.3px;background:#aaa;"></div>
<div style="left:1249px;top:53px;width:1px;height:996px;background:#2b2b2b;"></div>
<div style="left:1250px;top:53px;width:578px;height:35px;background:#181818;"></div>
<div style="left:1250px;top:87px;width:578px;height:1px;background:#2b2b2b;"></div>
<div style="left:1395px;top:53px;width:1px;height:34px;background:#2b2b2b;"></div>
<div style="left:1560px;top:53px;width:1px;height:34px;background:#2b2b2b;"></div>
<div style="left:1561px;top:53px;width:123px;height:35px;background:#1f1f1f;"></div>
<div style="left:1683px;top:53px;width:1px;height:35px;background:#2b2b2b;"></div>
<svg style="left:1281px;top:64px;" width="12" height="12" viewBox="0 0 16 16"><path d="M11.2 4.6 A5 5 0 1 0 11.2 11.4" fill="none" stroke="#519aba" stroke-width="3"/><path d="M9.2 8 H12.8 M11 6.2 V9.8 M13 8 H16 M14.5 6.5 V9.5" stroke="#519aba" stroke-width="1.3" fill="none"/></svg>
<span class="t s" style="left:1299.60px;top:61.00px;font-size:13px;line-height:19px;color:#f88070;letter-spacing:0.394px;">main.cpp</span>
<span class="t s" style="left:1361.00px;top:61.00px;font-size:13px;line-height:19px;color:#f88070;letter-spacing:-0.496px;">7, M</span>
<span class="t s" style="left:1427.60px;top:60.00px;font-size:14px;line-height:20px;color:#519aba;letter-spacing:0.738px;font-weight:700;">M</span>
<span class="t s" style="left:1446.00px;top:61.00px;font-size:13px;line-height:19px;color:#e2c08d;letter-spacing:0.197px;">CMakeLists.txt</span>
<span class="t s" style="left:1539.50px;top:61.00px;font-size:13px;line-height:19px;color:#e2c08d;letter-spacing:-0.329px;">M</span>
<svg style="left:1567.0px;top:63.0px;" width="16" height="16" viewBox="0 0 16 16"><path d="M4 4 L12 12 M12 4 L4 12" fill="none" stroke="#8c8c8c" stroke-width="1.0" stroke-linecap="round" stroke-linejoin="round"/></svg>
<svg style="left:1590px;top:63px;" width="16" height="16" viewBox="0 0 16 16"><path d="M1.5 2.5 H10.5 V4" fill="none" stroke="#a074c4" stroke-width="1.2"/><path d="M1.5 2.5 V9.5 H3" fill="none" stroke="#a074c4" stroke-width="1.2"/><rect x="3.6" y="4.6" width="10.4" height="8.4" fill="none" stroke="#a074c4" stroke-width="1.2"/><path d="M4.5 12.5 L7.5 8.5 L9.6 11 L11 9.6 L13.4 12.5 Z" fill="#a074c4"/><circle cx="11.3" cy="6.8" r="0.9" fill="#a074c4"/></svg>
<span class="t s" style="left:1611.00px;top:61.00px;font-size:13px;line-height:19px;color:#73c991;letter-spacing:0.661px;">out.png</span>
<span class="t s" style="left:1664.50px;top:61.00px;font-size:13px;line-height:19px;color:#73c991;letter-spacing:-0.388px;">U</span>
<svg style="left:1796.0px;top:63.0px;" width="16" height="16" viewBox="0 0 16 16"><circle cx="3.5" cy="8" r="1.1" fill="#ccc"/><circle cx="8" cy="8" r="1.1" fill="#ccc"/><circle cx="12.5" cy="8" r="1.1" fill="#ccc"/></svg>
<div style="left:1250px;top:88px;width:578px;height:22px;background:#1f1f1f;"></div>
<svg style="left:1267.5px;top:92.5px;" width="15" height="15" viewBox="0 0 16 16"><path d="M1.5 2.5 H10.5 V4" fill="none" stroke="#a074c4" stroke-width="1.2"/><path d="M1.5 2.5 V9.5 H3" fill="none" stroke="#a074c4" stroke-width="1.2"/><rect x="3.6" y="4.6" width="10.4" height="8.4" fill="none" stroke="#a074c4" stroke-width="1.2"/><path d="M4.5 12.5 L7.5 8.5 L9.6 11 L11 9.6 L13.4 12.5 Z" fill="#a074c4"/><circle cx="11.3" cy="6.8" r="0.9" fill="#a074c4"/></svg>
<span class="t s" style="left:1287.30px;top:90.00px;font-size:13px;line-height:19px;color:#a9a9a9;letter-spacing:0.561px;">out.png</span>
<div style="left:1250px;top:110px;width:578px;height:939px;background:#1f1f1f;"></div>
<div style="left:1250px;top:110px;width:567px;height:929px;background-color:#202020;background-image:conic-gradient(#141414 25%,#202020 0 50%,#141414 0 75%,#202020 0);background-size:38.4px 38.4px;background-position:-15.3px -5.5px"></div>
<div style="left:1817px;top:440px;width:11px;height:250px;background:rgba(121,121,121,.45);"></div>
<div style="left:1503px;top:1039px;width:39px;height:10px;background:rgba(121,121,121,.45);"></div>
<div style="left:1250px;top:1039px;width:578px;height:10px;background:rgba(24,24,24,.0);"></div>
<div style="left:1497px;top:88.5px;width:181px;height:27px;background:#181818;border:1px solid #3a3a3a;border-radius:5px;box-shadow:0 1px 4px rgba(0,0,0,.5)"></div>
<div style="left:1510.4px;top:96.9px;width:2px;height:2px;background:#8a8a8a"></div>
<div style="left:1510.4px;top:101.30000000000001px;width:2px;height:2px;background:#8a8a8a"></div>
<div style="left:1510.4px;top:105.7px;width:2px;height:2px;background:#8a8a8a"></div>
<div style="left:1514.8000000000002px;top:96.9px;width:2px;height:2px;background:#8a8a8a"></div>
<div style="left:1514.8000000000002px;top:101.30000000000001px;width:2px;height:2px;background:#8a8a8a"></div>
<div style="left:1514.8000000000002px;top:105.7px;width:2px;height:2px;background:#8a8a8a"></div>
<div style="left:1528.7px;top:96.5px;width:1.8px;height:10.5px;background:#75beff;"></div>
<div style="left:1534.3px;top:96.5px;width:1.8px;height:10.5px;background:#75beff;"></div>
<svg style="left:1550px;top:94px;" width="16" height="16" viewBox="0 0 16 16"><path d="M2.5 8.5 A5.6 5.6 0 0 1 13 6.2 M13.4 2.8 V6.4 H9.8" fill="none" stroke="#3f6a96" stroke-width="1.3" stroke-linecap="round" stroke-linejoin="round"/><circle cx="8" cy="12" r="1.9" fill="#3f6a96"/></svg>
<svg style="left:1576px;top:94px;" width="16" height="16" viewBox="0 0 16 16"><path d="M8 1.5 V9 M4.6 5.8 L8 9.2 L11.4 5.8" fill="none" stroke="#3f6a96" stroke-width="1.3" stroke-linecap="round" stroke-linejoin="round"/><circle cx="8" cy="12.6" r="1.9" fill="#3f6a96"/></svg>
<svg style="left:1602px;top:94px;" width="16" height="16" viewBox="0 0 16 16"><path d="M8 9.5 V2 M4.6 5.4 L8 2 L11.4 5.4" fill="none" stroke="#3f6a96" stroke-width="1.3" stroke-linecap="round" stroke-linejoin="round"/><circle cx="8" cy="12.6" r="1.9" fill="#3f6a96"/></svg>
<svg style="left:1628px;top:93.5px;" width="17" height="17" viewBox="0 0 16 16"><path d="M3.4 5 A5.6 5.6 0 1 1 2.6 9.2 M3 1.8 V5.4 H6.6" fill="none" stroke="#89d185" stroke-width="1.5" stroke-linecap="round" stroke-linejoin="round"/></svg>
<div style="left:1656px;top:96px;width:12px;height:12px;border:2px solid #f48771;border-radius:2px"></div>
<div style="left:348px;top:1049px;width:1480px;height:329px;background:#181818;"></div>
<div style="left:348px;top:1049px;width:1480px;height:1px;background:#2b2b2b;"></div>
<span class="t s" style="left:368.00px;top:1060.00px;font-size:11px;line-height:16px;color:#9d9d9d;letter-spacing:-0.516px;">PROBLEMS</span>
<div style="left:435px;top:1059px;width:18px;height:18px;border-radius:9px;background:#616161"></div>
<span class="t s" style="left:440.94px;top:1060.00px;font-size:11px;line-height:16px;color:#f8f8f8;">7</span>
<span class="t s" style="left:475.00px;top:1060.00px;font-size:11px;line-height:16px;color:#9d9d9d;letter-spacing:-0.287px;">OUTPUT</span>
<span class="t s" style="left:543.00px;top:1060.00px;font-size:11px;line-height:16px;color:#9d9d9d;letter-spacing:-0.459px;">DEBUG CONSOLE</span>
<span class="t s" style="left:657.00px;top:1060.00px;font-size:11px;line-height:16px;color:#e7e7e7;letter-spacing:-0.252px;">TERMINAL</span>
<div style="left:655px;top:1080px;width:58px;height:1px;background:#0078d4;"></div>
<span class="t s" style="left:735.00px;top:1060.00px;font-size:11px;line-height:16px;color:#9d9d9d;letter-spacing:-0.639px;">PORTS</span>
<svg style="left:1466.0px;top:1060.0px;" width="16" height="16" viewBox="0 0 16 16"><ellipse cx="8" cy="9" rx="3.2" ry="4" fill="none" stroke="#ccc" stroke-width="1" stroke-linecap="round" stroke-linejoin="round"/><path d="M5.6 5.8 C5.6 3.4 10.4 3.4 10.4 5.8 M4.8 9 H1.8 M11.2 9 H14.2 M5 6.6 L2.6 4.6 M11 6.6 L13.4 4.6 M5.2 11.6 L2.8 13.6 M10.8 11.6 L13.2 13.6" fill="none" stroke="#ccc" stroke-width="1" stroke-linecap="round" stroke-linejoin="round"/><path d="M6.6 7.6 L9.4 10.4 M9.4 7.6 L6.6 10.4" fill="none" stroke="#ccc" stroke-width="0.9" stroke-linecap="round" stroke-linejoin="round"/></svg>
<span class="t s" style="left:1487.00px;top:1059.00px;font-size:12px;line-height:18px;color:#ccc;letter-spacing:-0.258px;">cppdbg: WaylandCaptureTests</span>
<svg style="left:1652.0px;top:1060.0px;" width="16" height="16" viewBox="0 0 16 16"><path d="M8 2.5 V13.5 M2.5 8 H13.5" fill="none" stroke="#ccc" stroke-width="1.1" stroke-linecap="round" stroke-linejoin="round"/></svg>
<svg style="left:1672.0px;top:1064.0px;" width="10" height="10" viewBox="0 0 16 16"><path d="M3.5 6 L8 10.5 L12.5 6" fill="none" stroke="#ccc" stroke-width="1.6" stroke-linecap="round" stroke-linejoin="round"/></svg>
<svg style="left:1692.0px;top:1060.0px;" width="16" height="16" viewBox="0 0 16 16"><rect x="2" y="2.5" width="12" height="11" rx="1" fill="none" stroke="#ccc" stroke-width="1.1" stroke-linecap="round" stroke-linejoin="round"/><path d="M8 2.5 V13.5" fill="none" stroke="#ccc" stroke-width="1.1" stroke-linecap="round" stroke-linejoin="round"/></svg>
<svg style="left:1718.0px;top:1060.0px;" width="16" height="16" viewBox="0 0 16 16"><path d="M3 4.5 H13 M6 4.5 V2.8 H10 V4.5 M4.2 4.5 L4.8 13.5 H11.2 L11.8 4.5 M6.7 6.5 V11.5 M9.3 6.5 V11.5" fill="none" stroke="#ccc" stroke-width="1.1" stroke-linecap="round" stroke-linejoin="round"/></svg>
<svg style="left:1744.0px;top:1060.0px;" width="16" height="16" viewBox="0 0 16 16"><circle cx="3.5" cy="8" r="1.1" fill="#ccc"/><circle cx="8" cy="8" r="1.1" fill="#ccc"/><circle cx="12.5" cy="8" r="1.1" fill="#ccc"/></svg>
<svg style="left:1770.0px;top:1059.0px;" width="16" height="16" viewBox="0 0 16 16"><path d="M3.5 10 L8 5.5 L12.5 10" fill="none" stroke="#ccc" stroke-width="1.2" stroke-linecap="round" stroke-linejoin="round"/></svg>
<svg style="left:1796.5px;top:1060.0px;" width="15" height="15" viewBox="0 0 16 16"><path d="M4 4 L12 12 M12 4 L4 12" fill="none" stroke="#ccc" stroke-width="1.2" stroke-linecap="round" stroke-linejoin="round"/></svg>
<span class="t m" style="left:368.00px;top:1111.06px;font-size:14px;line-height:19px;color:#ccc;letter-spacing:-0.430px;">Reaching while</span>
<span class="t m" style="left:368.00px;top:1130.06px;font-size:14px;line-height:19px;color:#ccc;letter-spacing:-0.430px;">pid : 16141</span>
<span class="t m" style="left:368.00px;top:1149.06px;font-size:14px;line-height:19px;color:#ccc;letter-spacing:-0.430px;">pipewire_fd : 8</span>
<span class="t m" style="left:368.00px;top:1168.06px;font-size:14px;line-height:19px;color:#ccc;letter-spacing:-0.430px;">/proc/16141/fd/8</span>
<span class="t m" style="left:368.00px;top:1187.06px;font-size:14px;line-height:19px;color:#ccc;letter-spacing:-0.430px;">Capture data ready !</span>
<span class="t m" style="left:368.00px;top:1206.06px;font-size:14px;line-height:19px;color:#ccc;letter-spacing:-0.430px;">Waiting for xdg to close...</span>
<span class="t m" style="left:368.00px;top:1225.06px;font-size:14px;line-height:19px;color:#ccc;letter-spacing:-0.430px;">1.0.2</span>
<span class="t m" style="left:368.00px;top:1244.06px;font-size:14px;line-height:19px;color:#ccc;letter-spacing:-0.430px;">Params changed !</span>
<span class="t m" style="left:368.00px;top:1263.06px;font-size:14px;line-height:19px;color:#ccc;letter-spacing:-0.430px;">Params changed !</span>
<span class="t m" style="left:368.00px;top:1282.06px;font-size:14px;line-height:19px;color:#ccc;letter-spacing:-0.430px;">Params changed !</span>
<div style="left:0px;top:1379px;width:1828px;height:21px;background:#0078d4;"></div>
<div style="left:38px;top:1379px;width:72px;height:21px;background:rgba(255,255,255,.09);"></div>
<svg style="left:9px;top:1381px;" width="16" height="16" viewBox="0 0 16 16"><path d="M3.4 7.2 L6.6 10.4 L3.4 13.6 M12.8 2.6 L9.6 5.8 L12.8 9" fill="none" stroke="#fff" stroke-width="1.2" stroke-linecap="round" stroke-linejoin="round"/></svg>
<svg style="left:38px;top:1381px;" width="16" height="16" viewBox="0 0 16 16"><circle cx="5" cy="3.6" r="1.7" fill="none" stroke="#fff" stroke-width="1" stroke-linecap="round" stroke-linejoin="round"/><circle cx="5" cy="12.4" r="1.7" fill="none" stroke="#fff" stroke-width="1" stroke-linecap="round" stroke-linejoin="round"/><circle cx="11.5" cy="5.6" r="1.7" fill="none" stroke="#fff" stroke-width="1" stroke-linecap="round" stroke-linejoin="round"/><path d="M5 5.3 V10.7 M11.5 7.3 C11.5 10 5 8.6 5 10.7" fill="none" stroke="#fff" stroke-width="1" stroke-linecap="round" stroke-linejoin="round"/></svg>
<span class="t s" style="left:57.00px;top:1380.00px;font-size:12px;line-height:18px;color:#fff;letter-spacing:0.665px;">master*</span>
<svg style="left:109px;top:1381px;" width="16" height="16" viewBox="0 0 16 16"><path d="M2.8 7 A5.3 5.3 0 0 1 12.6 5.2 M13 2.4 V5.4 H10 M13.2 9 A5.3 5.3 0 0 1 3.4 10.8 M3 13.6 V10.6 H6" fill="none" stroke="#fff" stroke-width="1" stroke-linecap="round" stroke-linejoin="round"/></svg>
<svg style="left:136.5px;top:1381.5px;" width="15" height="15" viewBox="0 0 16 16"><circle cx="8" cy="8" r="6" fill="none" stroke="#fff" stroke-width="1" stroke-linecap="round" stroke-linejoin="round"/><path d="M5.7 5.7 L10.3 10.3 M10.3 5.7 L5.7 10.3" fill="none" stroke="#fff" stroke-width="1" stroke-linecap="round" stroke-linejoin="round"/></svg>
<span class="t s" style="left:155.00px;top:1380.00px;font-size:12px;line-height:18px;color:#fff;">7</span>
<svg style="left:163.5px;top:1381.5px;" width="15" height="15" viewBox="0 0 16 16"><path d="M8 2.2 L14.2 13.4 H1.8 Z M8 6.4 V10 M8 11.4 V11.6" fill="none" stroke="#fff" stroke-width="1" stroke-linecap="round" stroke-linejoin="round"/></svg>
<span class="t s" style="left:182.00px;top:1380.00px;font-size:12px;line-height:18px;color:#fff;">0</span>
<svg style="left:204px;top:1381px;" width="16" height="16" viewBox="0 0 16 16"><path d="M8 7 L4.6 14 M8 7 L11.4 14 M5.8 11.6 H10.2" fill="none" stroke="#fff" stroke-width="1" stroke-linecap="round" stroke-linejoin="round"/><circle cx="8" cy="6" r="1.2" fill="none" stroke="#fff" stroke-width="1" stroke-linecap="round" stroke-linejoin="round"/><path d="M4.6 9 A4.6 4.6 0 0 1 4.6 3 M11.4 3 A4.6 4.6 0 0 1 11.4 9 M2.6 10.6 A7 7 0 0 1 2.6 1.6 M13.4 1.6 A7 7 0 0 1 13.4 10.6" fill="none" stroke="#fff" stroke-width="0.9" stroke-linecap="round" stroke-linejoin="round"/></svg>
<span class="t s" style="left:222.00px;top:1380.00px;font-size:12px;line-height:18px;color:#fff;">0</span>
<svg style="left:243px;top:1381px;" width="16" height="16" viewBox="0 0 16 16"><path d="M5 2 L14 8 L7.5 12.3" fill="none" stroke="#fff" stroke-width="1.0" stroke-linecap="round" stroke-linejoin="round"/><path d="M5 2 V7" fill="none" stroke="#fff" stroke-width="1.0" stroke-linecap="round" stroke-linejoin="round"/><ellipse cx="4.2" cy="11.3" rx="2" ry="2.5" fill="none" stroke="#fff" stroke-width="0.9" stroke-linecap="round" stroke-linejoin="round"/><path d="M1 11.3 H2.2 M6.2 11.3 H7.4 M1.6 8.6 L2.7 9.5 M6.8 8.6 L5.7 9.5 M1.6 14 L2.7 13.1 M6.8 14 L5.7 13.1" fill="none" stroke="#fff" stroke-width="0.9" stroke-linecap="round" stroke-linejoin="round"/></svg>
<span class="t s" style="left:261.00px;top:1380.00px;font-size:12px;line-height:18px;color:#fff;letter-spacing:0.206px;">(gdb) Launch (WaylandCaptureTests)</span>
<svg style="left:482.5px;top:1381.5px;" width="15" height="15" viewBox="0 0 16 16"><path d="M7.35 1.43 L8.65 1.43 L9.45 3.22 L10.36 3.59 L12.19 2.90 L13.10 3.81 L12.41 5.64 L12.78 6.55 L14.57 7.35 L14.57 8.65 L12.78 9.45 L12.41 10.36 L13.10 12.19 L12.19 13.10 L10.36 12.41 L9.45 12.78 L8.65 14.57 L7.35 14.57 L6.55 12.78 L5.64 12.41 L3.81 13.10 L2.90 12.19 L3.59 10.36 L3.22 9.45 L1.43 8.65 L1.43 7.35 L3.22 6.55 L3.59 5.64 L2.90 3.81 L3.81 2.90 L5.64 3.59 L6.55 3.22Z" fill="none" stroke="#fff" stroke-width="1.0" stroke-linecap="round" stroke-linejoin="round"/><circle cx="8" cy="8" r="2.1" fill="none" stroke="#fff" stroke-width="1.0" stroke-linecap="round" stroke-linejoin="round"/></svg>
<span class="t s" style="left:500.00px;top:1380.00px;font-size:12px;line-height:18px;color:#fff;letter-spacing:0.463px;">Build</span>
<svg style="left:544.5px;top:1381.5px;" width="15" height="15" viewBox="0 0 16 16"><ellipse cx="8" cy="9" rx="3.2" ry="4" fill="none" stroke="#fff" stroke-width="1.0" stroke-linecap="round" stroke-linejoin="round"/><path d="M5.6 5.8 C5.6 3.4 10.4 3.4 10.4 5.8 M4.8 9 H1.8 M11.2 9 H14.2 M5 6.6 L2.6 4.6 M11 6.6 L13.4 4.6 M5.2 11.6 L2.8 13.6 M10.8 11.6 L13.2 13.6" fill="none" stroke="#fff" stroke-width="1.0" stroke-linecap="round" stroke-linejoin="round"/></svg>
<svg style="left:575.0px;top:1382.0px;" width="14" height="14" viewBox="0 0 16 16"><path d="M4.5 2.8 L12.8 8 L4.5 13.2 Z" fill="none" stroke="#fff" stroke-width="1.2" stroke-linecap="round" stroke-linejoin="round"/></svg>
<span class="t s" style="left:605.00px;top:1380.00px;font-size:12px;line-height:18px;color:#fff;letter-spacing:0.305px;">"main.cpp" 228L 5439C written</span>
<span class="t s" style="left:1431.40px;top:1380.00px;font-size:12px;line-height:18px;color:#fff;letter-spacing:0.017px;">Ln 79, Col 48</span>
<span class="t s" style="left:1519.00px;top:1380.00px;font-size:12px;line-height:18px;color:#fff;letter-spacing:-0.152px;">Spaces: 2</span>
<span class="t s" style="left:1587.60px;top:1380.00px;font-size:12px;line-height:18px;color:#fff;letter-spacing:-0.319px;">UTF-8</span>
<span class="t s" style="left:1636.00px;top:1380.00px;font-size:12px;line-height:18px;color:#fff;letter-spacing:-1.002px;">LF</span>
<span class="t s" style="left:1663.00px;top:1380.00px;font-size:12px;line-height:18px;color:#fff;letter-spacing:0.550px;font-size:11px;">{ }</span>
<span class="t s" style="left:1682.00px;top:1380.00px;font-size:12px;line-height:18px;color:#fff;letter-spacing:-0.561px;">C++</span>
<span class="t s" style="left:1718.00px;top:1380.00px;font-size:12px;line-height:18px;color:#fff;letter-spacing:0.262px;">Linux</span>
<div style="left:1756px;top:1379px;width:34px;height:21px;background:#7a6400;"></div>
<svg style="left:1765.5px;top:1381.5px;" width="15" height="15" viewBox="0 0 16 16"><path d="M8 2.2 L14.2 13.4 H1.8 Z M8 6.4 V10 M8 11.4 V11.6" fill="none" stroke="#fff" stroke-width="1" stroke-linecap="round" stroke-linejoin="round"/></svg>
<svg style="left:1797px;top:1381px;" width="16" height="16" viewBox="0 0 16 16"><path d="M8 2.2 C5.4 2.2 4.4 4.2 4.4 6.4 V9.6 L3 11.6 H13 L11.6 9.6 V8.4 M6.8 13.2 C7 14.2 9 14.2 9.2 13.2" fill="none" stroke="#fff" stroke-width="1" stroke-linecap="round" stroke-linejoin="round"/><circle cx="11.6" cy="4.4" r="2.3" fill="#fff"/></svg>
<div style="left:1827px;top:0;width:1px;height:1400px;background:#4d5156"></div>
<div style="left:0px;top:1400px;width:3440px;height:40px;background:#2a2e32;"></div>
<svg style="left:8px;top:1404px;" width="32" height="32" viewBox="0 0 32 32"><circle cx="9.5" cy="6" r="1.8" fill="#fcfcfc"/><circle cx="5.2" cy="16" r="2.6" fill="#fcfcfc"/><circle cx="12.6" cy="25.2" r="3.2" fill="#fcfcfc"/><path d="M18.5 7.2 L27 14.4 L18.5 21.6" fill="none" stroke="#fcfcfc" stroke-width="3.6" stroke-linejoin="miter"/></svg>
<div style="left:54px;top:1406px;width:28px;height:28px;background:#383c40;border-radius:2px;overflow:hidden"><svg style="left:0;top:0" width="28" height="28" viewBox="0 0 28 28"><path d="M0 28 V19 L5 12 L9 12 L14 19 L19 17 L23 17 L28 24 V28 Z" fill="#58b175"/><path d="M0 28 V22 L5 15 L9 15 L14 22 L19 20 L23 20 L28 27 V28 Z" fill="#7fcf97"/></svg></div>
<svg style="left:97px;top:1405px;" width="30" height="30" viewBox="0 0 30 30"><path d="M0 3 H12 L14 6 H30 V27 H0 Z" fill="#2a8fd6"/><path d="M0 8 H30 V10 H0 Z" fill="#e8f4fc"/><path d="M0 10 H30 V27 H0 Z" fill="#46aef0"/><path d="M0 25 H30 V27 H0 Z" fill="#2a8fd6"/></svg>
<div style="left:137px;top:1400px;width:266px;height:40px;background:#4b4e54;"></div>
<div style="left:137px;top:1400px;width:266px;height:3px;background:#6f7377;"></div>
<span class="t s" style="left:176.00px;top:1411.00px;font-size:13.33px;line-height:19px;color:#fcfcfc;letter-spacing:0.234px;">Lutris</span>
<div style="left:405px;top:1400px;width:266px;height:40px;background:#4b4e54;"></div>
<div style="left:405px;top:1400px;width:266px;height:3px;background:#6f7377;"></div>
<span class="t s" style="left:444.00px;top:1411.00px;font-size:13.33px;line-height:19px;color:#fcfcfc;letter-spacing:0.061px;">Rambox</span>
<div style="left:673px;top:1400px;width:266px;height:40px;background:#30576e;"></div>
<div style="left:673px;top:1400px;width:266px;height:3px;background:#3daee9;"></div>
<span class="t s" style="left:712.00px;top:1411.00px;font-size:13.33px;line-height:19px;color:#fcfcfc;letter-spacing:0.056px;">PipeWire: Stream — Mozilla Firefox</span>
<div style="left:941px;top:1400px;width:266px;height:40px;background:#2f5f80;"></div>
<div style="left:941px;top:1400px;width:266px;height:3px;background:#3daee9;"></div>
<span class="t s" style="left:980.00px;top:1411.00px;font-size:13.33px;line-height:19px;color:#fcfcfc;letter-spacing:0.111px;">main.cpp - Vokonikorn - VSCodium</span>
<div style="left:1209px;top:1400px;width:266px;height:40px;background:#4b4e54;"></div>
<div style="left:1209px;top:1400px;width:266px;height:3px;background:#6f7377;"></div>
<span class="t s" style="left:1248.00px;top:1411.00px;font-size:13.33px;line-height:19px;color:#fcfcfc;letter-spacing:0.062px;">screencast-portal.c - obs-studio - V...</span>
<div style="left:1477px;top:1400px;width:266px;height:40px;background:#4b4e54;"></div>
<div style="left:1477px;top:1400px;width:266px;height:3px;background:#6f7377;"></div>
<span class="t s" style="left:1516.00px;top:1411.00px;font-size:13.33px;line-height:19px;color:#fcfcfc;letter-spacing:0.171px;">PipwireTuto5 — Dolphin</span>
<div style="left:1745px;top:1400px;width:266px;height:40px;background:#4b4e54;"></div>
<div style="left:1745px;top:1400px;width:266px;height:3px;background:#6f7377;"></div>
<span class="t s" style="left:1784.00px;top:1411.00px;font-size:13.33px;line-height:19px;color:#fcfcfc;letter-spacing:0.050px;">main.cpp — Kate</span>
<div style="left:141.2px;top:1404.7px;width:30.6px;height:30.6px;border-radius:15.3px;background:#6b4636;"></div>
<div style="left:148.8px;top:1411.3999999999999px;width:22.4px;height:22.4px;border-radius:11.2px;background:radial-gradient(circle at 42% 45%,#ffb300 0 25%,#ff9800 60%,#f57c00);"></div>
<svg style="left:141px;top:1404px;" width="32" height="32" viewBox="0 0 32 32"><path d="M10.5 28 C5 23 5.5 12.5 13 9.5" fill="none" stroke="#f1ece6" stroke-width="2.6" stroke-linecap="round"/><path d="M10.6 13.6 C13 7.2 22 5.6 27.6 9 C29.6 10 29.8 11.6 28.4 12 C24 11 17 10.4 13.6 15.4 Z" fill="#f6f3ef"/><circle cx="26.4" cy="9.4" r="0.8" fill="#333"/></svg>
<div style="left:408.5px;top:1404.5px;width:31.0px;height:31.0px;border-radius:15.5px;background:linear-gradient(160deg,#1f97a0,#1b4a63);"></div>
<svg style="left:408px;top:1404px;" width="32" height="32" viewBox="0 0 32 32"><path d="M10.5 17 V13.5 C10.5 8.5 21.5 8.5 21.5 13.5 V17 C21.5 19 18.5 19 18.5 17 V15.5 H13.5 V17 C13.5 19 10.5 19 10.5 17 Z" fill="none" stroke="#fff" stroke-width="1.9" stroke-linejoin="round"/><path d="M13.5 17 V21 C13.5 23.6 10.5 23.6 10.5 21 M18.5 17 V21 C18.5 23.6 21.5 23.6 21.5 21 M7 15.5 V19.5 M25 15.5 V19.5" fill="none" stroke="#fff" stroke-width="1.9" stroke-linecap="round"/></svg>
<div style="left:677.0px;top:1406.5px;width:29.0px;height:29.0px;border-radius:14.5px;background:conic-gradient(from 20deg at 50% 50%,#ffde3d,#ffb02e 20%,#ff7139 35%,#ff3f7e 55%,#ff5a3a 75%,#ffbd30 90%,#ffde3d);"></div>
<div style="left:682.3px;top:1414.3px;width:14.4px;height:14.4px;border-radius:7.2px;background:radial-gradient(circle at 45% 40%,#b06bff,#7542e5);"></div>
<svg style="left:676px;top:1403px;" width="32" height="32" viewBox="0 0 32 32"><path d="M16 5 C18.5 1.5 21 1 21.5 1 C21 3.5 23 5 25.5 8.5 C27.5 11.5 28 15 27 18 C26.5 13.5 24.5 11 21.5 9.5 C20 8 17.5 7 16 5 Z" fill="#ffe04a"/><path d="M6.5 9.5 C7.5 8 9 7.5 10 6.5 C10 8.5 11.5 10 13.5 10.5 C16.5 11 19 12.5 19.5 15.5 C17 13.5 14 13.5 12 15 C10.5 13.5 8 13 6 14 C5.5 12.5 5.8 10.8 6.5 9.5 Z" fill="#ffb52b"/></svg>
<div style="left:944.5px;top:1404.5px;width:30px;height:30px;border-radius:15px;background:#f4f6fa;"></div>
<svg style="left:947.5px;top:1407.5px;" width="24" height="24" viewBox="0 0 24 24"><path d="M12 21 C12 17 11.5 15.5 10 13.5 C8.5 11.5 8.2 9.5 8.4 6 M10 13.5 C8 12.8 5.8 12.8 4.4 10.8 M5.6 12 C5.6 10 5.2 8.8 4.6 7.6 M12 17.5 C13 14.5 15.5 13.5 16 10 C16.2 8 15.8 6.5 15.6 4.8 M15.8 11.5 C17.5 11 19.2 10.8 19.8 8.4 M12.2 12 C12.4 10 12 8.6 11.8 7.4" fill="none" stroke="#3b78d8" stroke-width="2.2" stroke-linecap="round"/></svg>
<div style="left:1212.5px;top:1404.5px;width:30px;height:30px;border-radius:15px;background:#f4f6fa;"></div>
<svg style="left:1215.5px;top:1407.5px;" width="24" height="24" viewBox="0 0 24 24"><path d="M12 21 C12 17 11.5 15.5 10 13.5 C8.5 11.5 8.2 9.5 8.4 6 M10 13.5 C8 12.8 5.8 12.8 4.4 10.8 M5.6 12 C5.6 10 5.2 8.8 4.6 7.6 M12 17.5 C13 14.5 15.5 13.5 16 10 C16.2 8 15.8 6.5 15.6 4.8 M15.8 11.5 C17.5 11 19.2 10.8 19.8 8.4 M12.2 12 C12.4 10 12 8.6 11.8 7.4" fill="none" stroke="#3b78d8" stroke-width="2.2" stroke-linecap="round"/></svg>
<svg style="left:1481px;top:1405px;" width="30" height="30" viewBox="0 0 30 30"><path d="M0 3 H12 L14 6 H30 V27 H0 Z" fill="#2a8fd6"/><path d="M0 8 H30 V10 H0 Z" fill="#e8f4fc"/><path d="M0 10 H30 V27 H0 Z" fill="#46aef0"/><path d="M0 25 H30 V27 H0 Z" fill="#2a8fd6"/></svg>
<div style="left:1749.5px;top:1405.5px;width:29.0px;height:29.0px;border-radius:14.5px;background:linear-gradient(135deg,#35c3ff,#1668d8);"></div>
<svg style="left:1748px;top:1404px;" width="32" height="32" viewBox="0 0 32 32"><path d="M7 11.5 C12 8.5 19 7.5 25 9 C22 10 20.5 11 19.5 12.5 C23 13.5 25 16 25.5 19 C22.5 16.5 20 16 17.5 16.5 C18.5 19.5 18.5 23 17 26 C16.5 22 15 19.5 13 18 C11.5 19.5 10 20.5 8 21 C10 18.5 11 16.5 11 14.5 C9.5 13.5 8 12.5 7 11.5 Z" fill="#e8eef5"/></svg>
<div style="left:3047px;top:1404px;width:35.5px;height:15.5px;background:#3f4348;"></div>
<div style="left:3083px;top:1404px;width:35px;height:15.5px;background:#3f4348;"></div>
<div style="left:3083px;top:1420px;width:35px;height:15.5px;background:#3f4348;"></div>
<div style="left:3047px;top:1420px;width:35.5px;height:15.5px;background:#5fb0e2;"></div>
<div style="left:3048px;top:1421px;width:17px;height:13.5px;background:rgba(255,255,255,.13);"></div>
<div style="left:3064px;top:1421px;width:18px;height:13.5px;background:rgba(255,255,255,.18);"></div>
<div style="left:3065px;top:1420px;width:3px;height:15.5px;background:rgba(40,120,180,.5);"></div>
<div style="left:3082.2px;top:1404px;width:1.1px;height:31.5px;background:#2a2e32;"></div>
<div style="left:3047px;top:1419.2px;width:71px;height:1.1px;background:#2a2e32;"></div>
<div style="left:3095px;top:1423.5px;width:11.5px;height:8px;border:1.2px solid #8e9296;background:#55595e"></div>
<div style="left:3136px;top:1414px;width:22px;height:12px;border:1px solid #8e9296;background:#17191b"></div>
<span class="t s" style="left:3137.79px;top:1413.00px;font-size:8.5px;line-height:14px;color:#fcfcfc;font-weight:700;">CKB</span>
<svg style="left:3168px;top:1411px;" width="18" height="18" viewBox="0 0 18 18"><rect x="3" y="3.5" width="12" height="12.5" rx="1" fill="none" stroke="#fcfcfc" stroke-width="1.4" stroke-linecap="round" stroke-linejoin="round"/><rect x="6" y="1.6" width="6" height="3.4" fill="#fcfcfc"/><path d="M5.8 8.5 H12.2 M5.8 11 H12.2 M5.8 13.4 H9.6" fill="none" stroke="#fcfcfc" stroke-width="1.1" stroke-linecap="round" stroke-linejoin="round"/></svg>
<svg style="left:3197px;top:1411px;" width="20" height="18" viewBox="0 0 20 18"><path d="M2 6.5 H5.5 L10 2.5 V15.5 L5.5 11.5 H2 Z" fill="#fcfcfc"/><path d="M12.4 5.8 A4.6 4.6 0 0 1 12.4 12.2" fill="none" stroke="#fcfcfc" stroke-width="1.4" stroke-linecap="round" stroke-linejoin="round"/><path d="M14.6 3.2 A8 8 0 0 1 14.6 14.8" fill="none" stroke="#8b8e91" stroke-width="1.4" stroke-linecap="round" stroke-linejoin="round"/></svg>
<svg style="left:3226px;top:1410px;" width="22" height="20" viewBox="0 0 22 20"><rect x="1" y="1.8" width="20" height="13.2" fill="#fcfcfc"/><rect x="2.6" y="3.4" width="16.8" height="9.6" fill="#4a4e52"/><circle cx="11" cy="8.2" r="3" fill="#fcfcfc"/><path d="M11 5.2 A3 3 0 0 0 11 11.2 Z" fill="#4a4e52"/><path d="M11 15 V17.8 M6 18.3 H16" fill="none" stroke="#fcfcfc" stroke-width="1.7" stroke-linecap="round" stroke-linejoin="round"/></svg>
<svg style="left:3259px;top:1410px;" width="16" height="20" viewBox="0 0 16 20"><path d="M3.5 6 L12 14 L8 17.6 V2.4 L12 6 L3.5 14" fill="none" stroke="#fcfcfc" stroke-width="1.2" stroke-linecap="round" stroke-linejoin="round"/></svg>
<svg style="left:3286px;top:1411px;" width="22" height="18" viewBox="0 0 22 18"><rect x="6.5" y="2" width="14" height="10" fill="none" stroke="#fcfcfc" stroke-width="1.6" stroke-linecap="round" stroke-linejoin="round"/><rect x="1.5" y="1.5" width="5.5" height="15" fill="#fcfcfc"/><path d="M13.5 12 V15 M10 15.6 H17" fill="none" stroke="#fcfcfc" stroke-width="1.5" stroke-linecap="round" stroke-linejoin="round"/><circle cx="4.2" cy="4.2" r="0.9" fill="#2a2e32"/></svg>
<svg style="left:3317px;top:1411px;" width="20" height="18" viewBox="0 0 20 18"><path d="M2 6.5 H5.5 L10 2.5 V15.5 L5.5 11.5 H2 Z" fill="#fcfcfc"/><path d="M12.4 5.8 A4.6 4.6 0 0 1 12.4 12.2" fill="none" stroke="#fcfcfc" stroke-width="1.4" stroke-linecap="round" stroke-linejoin="round"/><path d="M14.6 3.2 A8 8 0 0 1 14.6 14.8" fill="none" stroke="#8b8e91" stroke-width="1.4" stroke-linecap="round" stroke-linejoin="round"/></svg>
<svg style="left:3346px;top:1411px;" width="18" height="18" viewBox="0 0 18 18"><path d="M3.5 11.5 L9 6 L14.5 11.5" fill="none" stroke="#fcfcfc" stroke-width="1.3" stroke-linecap="round" stroke-linejoin="round"/></svg>
<span class="t s" style="left:3377.80px;top:1406.00px;font-size:13.3px;line-height:19px;color:#fcfcfc;letter-spacing:-0.171px;">00:03:02</span>
<span class="t s" style="left:3374.60px;top:1419.00px;font-size:10.8px;line-height:16px;color:#fcfcfc;letter-spacing:0.115px;">2024-01-13</span>
<svg style="left:1968px;top:948px;" width="22" height="30" viewBox="0 0 22 30"><path d="M4 4 L4 20 L8 20 L12 23.5 L12 18.5 L15.5 15.5 Z" fill="#4d4d4d" stroke="#fff" stroke-width="1.1" stroke-linejoin="round" style="filter:drop-shadow(0 1px 1.5px rgba(0,0,0,.35))"/></svg>
</body></html>
